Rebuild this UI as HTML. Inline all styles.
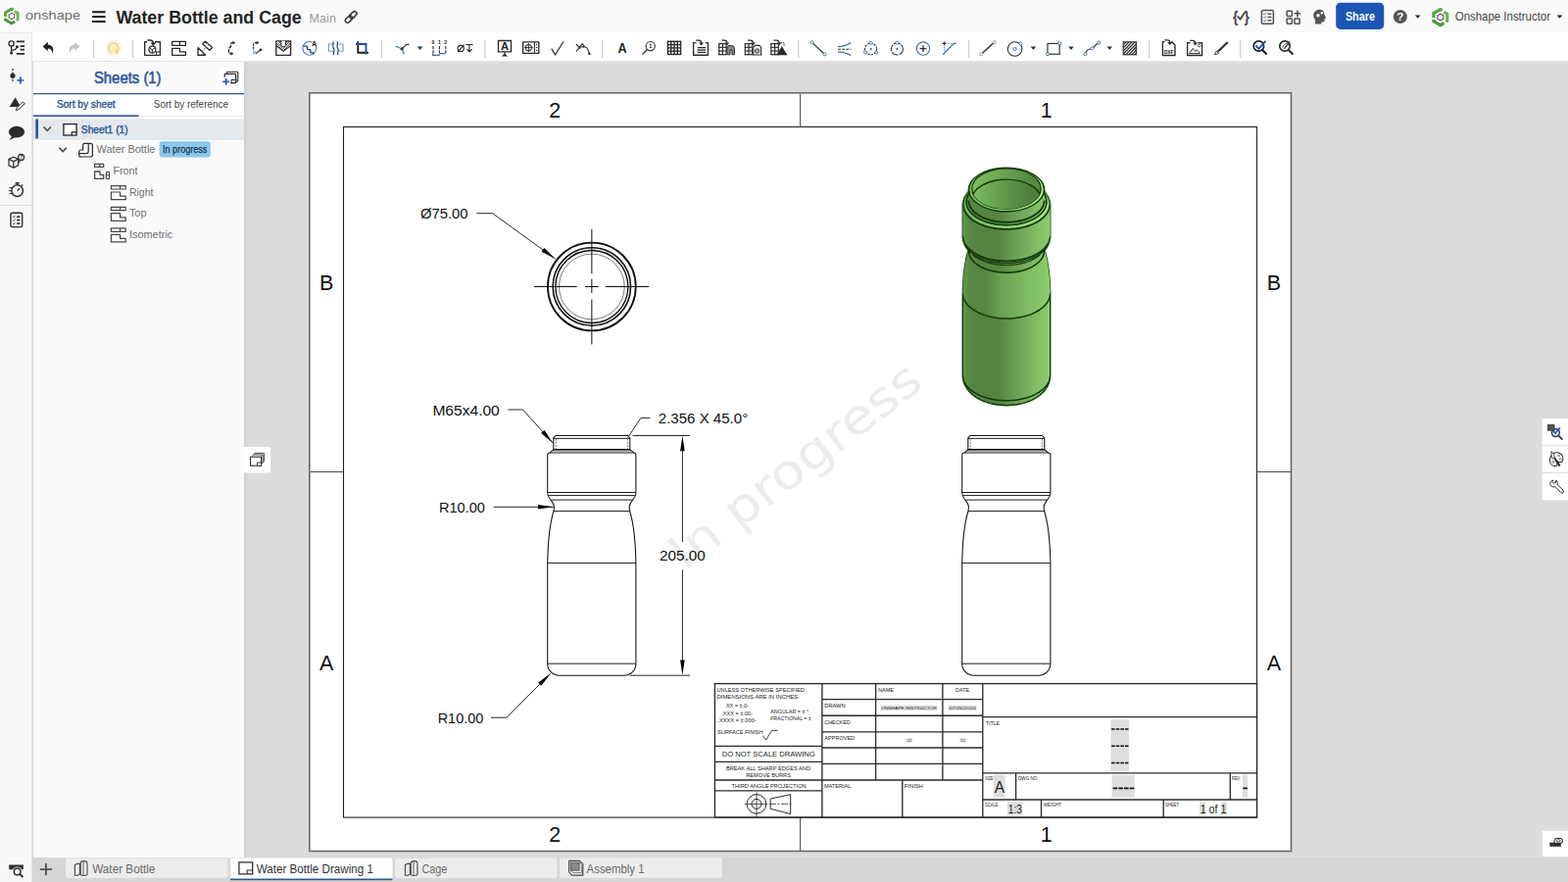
<!DOCTYPE html>
<html lang="en"><head><meta charset="utf-8"><title>Water Bottle and Cage | Onshape</title>
<style>
*{box-sizing:border-box;margin:0;padding:0}
html,body{width:1600px;height:900px;overflow:hidden;background:#dcdcdc;font-family:"Liberation Sans",sans-serif;}
#app{position:relative;width:1600px;height:900px;overflow:hidden}
.abs{position:absolute}
#header{position:absolute;left:0;top:0;width:1600px;height:33px;background:#fafafa}
#toolbar{position:absolute;left:33px;top:33px;width:1567px;height:30px;background:#fff;border-bottom:1px solid #e6e6e6}
#rail{position:absolute;left:0;top:33px;width:33px;height:867px;background:#f8f8f8;border-right:1px solid #e4e4e4;border-top:1px solid #ebebeb}
#panel{position:absolute;left:34px;top:63px;width:215px;height:812px;background:#fafafa}
#panelshadow{position:absolute;left:249px;top:63px;width:5px;height:812px;background:linear-gradient(90deg,#cfcfcf,#dcdcdc)}
#tabs{position:absolute;left:33px;top:875px;width:1567px;height:25px;background:#d6d6d6}
.t{position:absolute;white-space:nowrap;transform-origin:0 0;line-height:1}
svg{position:absolute;left:0;top:0;overflow:visible}
</style></head>
<body><div id="app">
<div id="header"></div>
<div id="toolbar"></div>
<div id="rail"></div>
<div id="panel"></div>
<div id="panelshadow"></div>
<div id="tabs"></div>
<svg id="sheet" width="1600" height="900" viewBox="0 0 1600 900" font-family='"Liberation Sans",sans-serif'>
<rect x="315.80" y="94.80" width="1001.70" height="773.70" fill="#fff" stroke="#686868" stroke-width="1.6"/>
<rect x="350.50" y="129.50" width="932.00" height="704.60" fill="none" stroke="#222" stroke-width="1.1"/>
<line x1="816.60" y1="96.00" x2="816.60" y2="129.50" stroke="#333" stroke-width="0.9"/>
<line x1="816.60" y1="834.00" x2="816.60" y2="868.00" stroke="#333" stroke-width="0.9"/>
<line x1="317.00" y1="481.50" x2="350.50" y2="481.50" stroke="#333" stroke-width="0.9"/>
<line x1="1282.50" y1="481.50" x2="1317.00" y2="481.50" stroke="#333" stroke-width="0.9"/>
<text transform="translate(821.5,488.5) rotate(-37.7)" x="0" y="0" text-anchor="middle" font-size="49" textLength="310" lengthAdjust="spacingAndGlyphs" fill="#ececec" font-family='"DejaVu Sans","Liberation Sans",sans-serif'>In progress</text>
<text x="566.30" y="120.30" font-size="21.5" fill="#111" text-anchor="middle">2</text>
<text x="566.30" y="858.80" font-size="21.5" fill="#111" text-anchor="middle">2</text>
<text x="1067.80" y="120.30" font-size="21.5" fill="#111" text-anchor="middle">1</text>
<text x="1067.80" y="858.80" font-size="21.5" fill="#111" text-anchor="middle">1</text>
<text x="333.20" y="296.10" font-size="21.5" fill="#111" text-anchor="middle">B</text>
<text x="333.20" y="683.70" font-size="21.5" fill="#111" text-anchor="middle">A</text>
<text x="1300.00" y="296.10" font-size="21.5" fill="#111" text-anchor="middle">B</text>
<text x="1300.00" y="683.70" font-size="21.5" fill="#111" text-anchor="middle">A</text>
<circle cx="603.85" cy="292.5" r="44.9" fill="none" stroke="#111" stroke-width="1.8"/>
<circle cx="603.85" cy="292.5" r="39.7" fill="none" stroke="#111" stroke-width="1.6"/>
<circle cx="603.85" cy="292.5" r="37" fill="none" stroke="#111" stroke-width="1.35"/>
<circle cx="603.85" cy="292.5" r="33.4" fill="none" stroke="#222" stroke-width="0.6"/>
<line x1="545.10" y1="292.50" x2="588.60" y2="292.50" stroke="#000" stroke-width="0.95"/>
<line x1="597.00" y1="292.50" x2="610.70" y2="292.50" stroke="#000" stroke-width="0.95"/>
<line x1="617.90" y1="292.50" x2="662.30" y2="292.50" stroke="#000" stroke-width="0.95"/>
<line x1="603.85" y1="233.70" x2="603.85" y2="279.10" stroke="#000" stroke-width="0.95"/>
<line x1="603.85" y1="284.80" x2="603.85" y2="298.90" stroke="#000" stroke-width="0.95"/>
<line x1="603.85" y1="305.50" x2="603.85" y2="351.50" stroke="#000" stroke-width="0.95"/>
<path d="M567.0999999999999,444.5 H640.5 L642.8,446.8 V458.6 L645.0999999999999,460.6 L646.5,462 Q648.9,462 648.9,464.5 V503 C648.9,509 642.4,511.5 642.1999999999999,517 C642.1999999999999,519 642.3,520 642.5999999999999,521.5 C645.3,530 648.4,548 648.9,575 V677 A12,12 0 0 1 636.9,689.2 H570.6999999999999 A12,12 0 0 1 558.6999999999999,677 V575 C559.1999999999999,548 562.3,530 565.0,521.5 C565.3,520 565.4,519 565.4,517 C565.1999999999999,511.5 558.6999999999999,509 558.6999999999999,503 V464.5 Q558.6999999999999,462 561.0999999999999,462 L562.5,460.6 L564.8,458.6 V446.8 Z" fill="none" stroke="#111" stroke-width="1.05" stroke-linejoin="round"/>
<line x1="564.80" y1="447.40" x2="642.80" y2="447.40" stroke="#111" stroke-width="0.95"/>
<line x1="567.20" y1="447.60" x2="567.20" y2="458.30" stroke="#333" stroke-width="0.6" stroke-dasharray="2.2 0.9"/>
<line x1="640.40" y1="447.60" x2="640.40" y2="458.30" stroke="#333" stroke-width="0.6" stroke-dasharray="2.2 0.9"/>
<line x1="564.80" y1="458.70" x2="642.80" y2="458.70" stroke="#111" stroke-width="1.2"/>
<line x1="563.80" y1="459.90" x2="643.80" y2="459.90" stroke="#222" stroke-width="0.9"/>
<line x1="561.10" y1="462.00" x2="646.50" y2="462.00" stroke="#111" stroke-width="0.95"/>
<line x1="558.70" y1="502.50" x2="648.90" y2="502.50" stroke="#111" stroke-width="0.95"/>
<line x1="559.40" y1="505.60" x2="648.20" y2="505.60" stroke="#111" stroke-width="0.95"/>
<line x1="562.80" y1="510.10" x2="644.80" y2="510.10" stroke="#111" stroke-width="0.95"/>
<line x1="565.00" y1="521.60" x2="642.60" y2="521.60" stroke="#111" stroke-width="0.95"/>
<line x1="558.70" y1="574.60" x2="648.90" y2="574.60" stroke="#111" stroke-width="0.95"/>
<line x1="558.70" y1="677.20" x2="648.90" y2="677.20" stroke="#111" stroke-width="0.95"/>
<path d="M990.0999999999999,444.5 H1063.5 L1065.8,446.8 V458.6 L1068.1,460.6 L1069.5,462 Q1071.8999999999999,462 1071.8999999999999,464.5 V503 C1071.8999999999999,509 1065.3999999999999,511.5 1065.2,517 C1065.2,519 1065.3,520 1065.6,521.5 C1068.3,530 1071.3999999999999,548 1071.8999999999999,575 V677 A12,12 0 0 1 1059.8999999999999,689.2 H993.6999999999999 A12,12 0 0 1 981.6999999999999,677 V575 C982.1999999999999,548 985.3,530 988.0,521.5 C988.3,520 988.4,519 988.4,517 C988.1999999999999,511.5 981.6999999999999,509 981.6999999999999,503 V464.5 Q981.6999999999999,462 984.0999999999999,462 L985.5,460.6 L987.8,458.6 V446.8 Z" fill="none" stroke="#111" stroke-width="1.05" stroke-linejoin="round"/>
<line x1="987.80" y1="447.40" x2="1065.80" y2="447.40" stroke="#111" stroke-width="0.95"/>
<line x1="990.20" y1="447.60" x2="990.20" y2="458.30" stroke="#333" stroke-width="0.6" stroke-dasharray="2.2 0.9"/>
<line x1="1063.40" y1="447.60" x2="1063.40" y2="458.30" stroke="#333" stroke-width="0.6" stroke-dasharray="2.2 0.9"/>
<line x1="987.80" y1="458.70" x2="1065.80" y2="458.70" stroke="#111" stroke-width="1.2"/>
<line x1="986.80" y1="459.90" x2="1066.80" y2="459.90" stroke="#222" stroke-width="0.9"/>
<line x1="984.10" y1="462.00" x2="1069.50" y2="462.00" stroke="#111" stroke-width="0.95"/>
<line x1="981.70" y1="502.50" x2="1071.90" y2="502.50" stroke="#111" stroke-width="0.95"/>
<line x1="982.40" y1="505.60" x2="1071.20" y2="505.60" stroke="#111" stroke-width="0.95"/>
<line x1="985.80" y1="510.10" x2="1067.80" y2="510.10" stroke="#111" stroke-width="0.95"/>
<line x1="988.00" y1="521.60" x2="1065.60" y2="521.60" stroke="#111" stroke-width="0.95"/>
<line x1="981.70" y1="574.60" x2="1071.90" y2="574.60" stroke="#111" stroke-width="0.95"/>
<line x1="981.70" y1="677.20" x2="1071.90" y2="677.20" stroke="#111" stroke-width="0.95"/>
<defs><linearGradient id="gbody" gradientUnits="userSpaceOnUse" x1="981.9" x2="1072.1" y1="0" y2="0"><stop offset="0" stop-color="#5f9c49"/><stop offset="0.09" stop-color="#578543"/><stop offset="0.4" stop-color="#568340"/><stop offset="0.56" stop-color="#679a50"/><stop offset="0.72" stop-color="#77ad5d"/><stop offset="0.87" stop-color="#82c066"/><stop offset="1" stop-color="#8dcd6f"/></linearGradient><linearGradient id="gsh" gradientUnits="userSpaceOnUse" x1="981.9" x2="1072.1" y1="0" y2="0"><stop offset="0" stop-color="#5f9c49"/><stop offset="0.09" stop-color="#578543"/><stop offset="0.27" stop-color="#588642"/><stop offset="0.44" stop-color="#6aa151"/><stop offset="0.62" stop-color="#78b05e"/><stop offset="0.85" stop-color="#84c468"/><stop offset="1" stop-color="#8dcd6f"/></linearGradient><linearGradient id="gface" gradientUnits="userSpaceOnUse" x1="981.9" x2="1072.1" y1="0" y2="0"><stop offset="0" stop-color="#6fb056"/><stop offset="0.35" stop-color="#86c96a"/><stop offset="1" stop-color="#a9ea8a"/></linearGradient><linearGradient id="gwall" gradientUnits="userSpaceOnUse" x1="981.9" x2="1072.1" y1="0" y2="0"><stop offset="0.1" stop-color="#7dc161"/><stop offset="0.45" stop-color="#6aa552"/><stop offset="0.8" stop-color="#568742"/><stop offset="1" stop-color="#4f7d3c"/></linearGradient><linearGradient id="gin" gradientUnits="userSpaceOnUse" x1="981.9" x2="1072.1" y1="0" y2="0"><stop offset="0.1" stop-color="#7cc05f"/><stop offset="0.4" stop-color="#65a04e"/><stop offset="0.75" stop-color="#527f3e"/><stop offset="1" stop-color="#4d7a3a"/></linearGradient><clipPath id="rimclip"><ellipse cx="1027.0" cy="192.6" rx="35.2" ry="20.6"/></clipPath></defs>
<path d="M1027.0,172.0 L1036.3,172.7 L1040.1,173.4 L1042.9,174.1 L1045.2,174.8 L1047.1,175.5 L1048.8,176.2 L1050.4,176.9 L1051.7,177.6 L1053.0,178.3 L1054.2,179.0 L1055.4,179.7 L1056.4,180.4 L1057.4,181.1 L1058.3,181.8 L1059.2,182.5 L1060.0,183.2 L1060.7,183.9 L1061.3,184.6 L1061.9,185.3 L1062.5,186.0 L1063.0,186.7 L1063.4,187.4 L1063.8,188.1 L1064.2,188.8 L1064.5,189.5 L1064.8,190.2 L1065.0,190.9 L1065.2,191.6 L1065.4,192.3 L1065.5,193.0 L1065.6,193.7 L1065.6,194.4 L1065.6,195.1 L1065.9,195.8 L1066.5,196.5 L1067.1,197.2 L1067.6,197.9 L1068.1,198.6 L1068.6,199.3 L1069.0,200.0 L1069.4,200.7 L1069.8,201.4 L1070.1,202.1 L1070.3,202.8 L1070.6,203.5 L1070.8,204.2 L1071.0,204.9 L1071.2,205.6 L1071.4,206.3 L1071.5,207.0 L1071.6,207.7 L1071.7,208.4 L1071.7,209.1 L1071.7,209.8 L1071.7,210.5 L1071.7,211.2 L1071.7,211.9 L1071.7,212.6 L1071.7,213.4 L1071.7,214.1 L1071.7,214.8 L1071.7,215.5 L1071.7,216.2 L1071.7,216.9 L1071.7,217.6 L1071.7,218.3 L1071.7,219.0 L1071.7,219.7 L1071.7,220.4 L1071.7,221.1 L1071.7,221.8 L1071.7,222.5 L1071.7,223.2 L1071.7,223.9 L1071.7,224.6 L1071.7,225.3 L1071.7,226.0 L1071.7,226.7 L1071.7,227.4 L1071.7,228.1 L1071.7,228.8 L1071.7,229.5 L1071.7,230.2 L1071.7,230.9 L1071.7,231.6 L1071.7,232.3 L1071.7,233.0 L1071.7,233.7 L1071.7,234.4 L1071.7,235.1 L1071.7,235.8 L1071.7,236.5 L1071.7,237.2 L1071.7,237.9 L1071.7,238.6 L1071.7,239.3 L1071.7,240.0 L1071.7,240.7 L1071.7,241.4 L1071.7,242.1 L1071.6,242.8 L1071.5,243.5 L1071.4,244.2 L1071.3,244.9 L1071.1,245.6 L1070.9,246.3 L1070.7,247.0 L1070.5,247.7 L1070.2,248.4 L1069.9,249.1 L1069.6,249.8 L1069.3,250.5 L1068.9,251.2 L1068.5,251.9 L1068.1,252.6 L1067.6,253.3 L1067.1,254.0 L1066.6,254.7 L1066.0,255.4 L1066.2,256.1 L1066.4,256.8 L1066.6,257.5 L1066.8,258.2 L1067.0,258.9 L1067.2,259.6 L1067.3,260.3 L1067.5,261.0 L1067.7,261.7 L1067.8,262.4 L1068.0,263.1 L1068.1,263.8 L1068.3,264.5 L1068.4,265.2 L1068.5,265.9 L1068.7,266.6 L1068.8,267.3 L1068.9,268.0 L1069.0,268.7 L1069.1,269.4 L1069.3,270.1 L1069.4,270.8 L1069.5,271.5 L1069.6,272.2 L1069.7,272.9 L1069.8,273.6 L1069.9,274.3 L1070.0,275.0 L1070.0,275.7 L1070.1,276.4 L1070.2,277.1 L1070.3,277.8 L1070.4,278.5 L1070.5,279.2 L1070.5,279.9 L1070.6,280.6 L1070.7,281.3 L1070.7,282.0 L1070.8,282.7 L1070.9,283.4 L1070.9,284.1 L1071.0,284.8 L1071.0,285.5 L1071.1,286.2 L1071.1,286.9 L1071.2,287.6 L1071.2,288.3 L1071.3,289.0 L1071.3,289.7 L1071.3,290.4 L1071.4,291.1 L1071.4,291.8 L1071.5,292.5 L1071.5,293.2 L1071.5,293.9 L1071.5,294.6 L1071.6,295.3 L1071.6,296.0 L1071.6,296.7 L1071.6,297.4 L1071.7,298.1 L1071.7,298.8 L1071.7,299.5 L1071.7,300.2 L1071.7,300.9 L1071.7,301.6 L1071.7,302.3 L1071.7,303.0 L1071.7,303.7 L1071.7,304.4 L1071.7,305.1 L1071.7,305.8 L1071.7,306.5 L1071.7,307.2 L1071.7,307.9 L1071.7,308.6 L1071.7,309.3 L1071.7,310.0 L1071.7,310.7 L1071.7,311.4 L1071.7,312.1 L1071.7,312.8 L1071.7,313.5 L1071.7,314.2 L1071.7,314.9 L1071.7,315.6 L1071.7,316.3 L1071.7,317.0 L1071.7,317.7 L1071.7,318.4 L1071.7,319.1 L1071.7,319.8 L1071.7,320.5 L1071.7,321.2 L1071.7,321.9 L1071.7,322.6 L1071.7,323.3 L1071.7,324.0 L1071.7,324.7 L1071.7,325.4 L1071.7,326.1 L1071.7,326.8 L1071.7,327.5 L1071.7,328.2 L1071.7,328.9 L1071.7,329.7 L1071.7,330.4 L1071.7,331.1 L1071.7,331.8 L1071.7,332.5 L1071.7,333.2 L1071.7,333.9 L1071.7,334.6 L1071.7,335.3 L1071.7,336.0 L1071.7,336.7 L1071.7,337.4 L1071.7,338.1 L1071.7,338.8 L1071.7,339.5 L1071.7,340.2 L1071.7,340.9 L1071.7,341.6 L1071.7,342.3 L1071.7,343.0 L1071.7,343.7 L1071.7,344.4 L1071.7,345.1 L1071.7,345.8 L1071.7,346.5 L1071.7,347.2 L1071.7,347.9 L1071.7,348.6 L1071.7,349.3 L1071.7,350.0 L1071.7,350.7 L1071.7,351.4 L1071.7,352.1 L1071.7,352.8 L1071.7,353.5 L1071.7,354.2 L1071.7,354.9 L1071.7,355.6 L1071.7,356.3 L1071.7,357.0 L1071.7,357.7 L1071.7,358.4 L1071.7,359.1 L1071.7,359.8 L1071.7,360.5 L1071.7,361.2 L1071.7,361.9 L1071.7,362.6 L1071.7,363.3 L1071.7,364.0 L1071.7,364.7 L1071.7,365.4 L1071.7,366.1 L1071.7,366.8 L1071.7,367.5 L1071.7,368.2 L1071.7,368.9 L1071.7,369.6 L1071.7,370.3 L1071.7,371.0 L1071.7,371.7 L1071.7,372.4 L1071.7,373.1 L1071.7,373.8 L1071.7,374.5 L1071.7,375.2 L1071.7,375.9 L1071.7,376.6 L1071.7,377.3 L1071.7,378.0 L1071.7,378.7 L1071.7,379.4 L1071.7,380.1 L1071.7,380.8 L1071.7,381.5 L1071.7,382.2 L1071.7,382.9 L1071.7,383.6 L1071.6,384.3 L1071.6,385.0 L1071.5,385.7 L1071.4,386.4 L1071.3,387.1 L1071.1,387.8 L1071.0,388.5 L1070.8,389.2 L1070.6,389.9 L1070.4,390.6 L1070.1,391.3 L1069.8,392.0 L1069.5,392.7 L1069.2,393.4 L1068.8,394.1 L1068.4,394.8 L1068.0,395.5 L1067.5,396.2 L1067.1,396.9 L1066.6,397.6 L1066.0,398.3 L1065.4,399.0 L1064.8,399.7 L1064.2,400.4 L1063.5,401.1 L1062.7,401.8 L1061.9,402.5 L1061.1,403.2 L1060.2,403.9 L1059.2,404.6 L1058.2,405.3 L1057.1,406.0 L1055.9,406.7 L1054.6,407.4 L1053.2,408.1 L1051.7,408.8 L1050.0,409.5 L1048.2,410.2 L1046.1,410.9 L1043.6,411.6 L1040.7,412.3 L1036.8,413.0 L1027.0,413.7 L1027.0,413.7 L1017.2,413.0 L1013.3,412.3 L1010.4,411.6 L1007.9,410.9 L1005.8,410.2 L1004.0,409.5 L1002.3,408.8 L1000.8,408.1 L999.4,407.4 L998.1,406.7 L996.9,406.0 L995.8,405.3 L994.8,404.6 L993.8,403.9 L992.9,403.2 L992.1,402.5 L991.3,401.8 L990.5,401.1 L989.8,400.4 L989.2,399.7 L988.6,399.0 L988.0,398.3 L987.4,397.6 L986.9,396.9 L986.5,396.2 L986.0,395.5 L985.6,394.8 L985.2,394.1 L984.8,393.4 L984.5,392.7 L984.2,392.0 L983.9,391.3 L983.6,390.6 L983.4,389.9 L983.2,389.2 L983.0,388.5 L982.9,387.8 L982.7,387.1 L982.6,386.4 L982.5,385.7 L982.4,385.0 L982.4,384.3 L982.3,383.6 L982.3,382.9 L982.3,382.2 L982.3,381.5 L982.3,380.8 L982.3,380.1 L982.3,379.4 L982.3,378.7 L982.3,378.0 L982.3,377.3 L982.3,376.6 L982.3,375.9 L982.3,375.2 L982.3,374.5 L982.3,373.8 L982.3,373.1 L982.3,372.4 L982.3,371.7 L982.3,371.0 L982.3,370.3 L982.3,369.6 L982.3,368.9 L982.3,368.2 L982.3,367.5 L982.3,366.8 L982.3,366.1 L982.3,365.4 L982.3,364.7 L982.3,364.0 L982.3,363.3 L982.3,362.6 L982.3,361.9 L982.3,361.2 L982.3,360.5 L982.3,359.8 L982.3,359.1 L982.3,358.4 L982.3,357.7 L982.3,357.0 L982.3,356.3 L982.3,355.6 L982.3,354.9 L982.3,354.2 L982.3,353.5 L982.3,352.8 L982.3,352.1 L982.3,351.4 L982.3,350.7 L982.3,350.0 L982.3,349.3 L982.3,348.6 L982.3,347.9 L982.3,347.2 L982.3,346.5 L982.3,345.8 L982.3,345.1 L982.3,344.4 L982.3,343.7 L982.3,343.0 L982.3,342.3 L982.3,341.6 L982.3,340.9 L982.3,340.2 L982.3,339.5 L982.3,338.8 L982.3,338.1 L982.3,337.4 L982.3,336.7 L982.3,336.0 L982.3,335.3 L982.3,334.6 L982.3,333.9 L982.3,333.2 L982.3,332.5 L982.3,331.8 L982.3,331.1 L982.3,330.4 L982.3,329.7 L982.3,328.9 L982.3,328.2 L982.3,327.5 L982.3,326.8 L982.3,326.1 L982.3,325.4 L982.3,324.7 L982.3,324.0 L982.3,323.3 L982.3,322.6 L982.3,321.9 L982.3,321.2 L982.3,320.5 L982.3,319.8 L982.3,319.1 L982.3,318.4 L982.3,317.7 L982.3,317.0 L982.3,316.3 L982.3,315.6 L982.3,314.9 L982.3,314.2 L982.3,313.5 L982.3,312.8 L982.3,312.1 L982.3,311.4 L982.3,310.7 L982.3,310.0 L982.3,309.3 L982.3,308.6 L982.3,307.9 L982.3,307.2 L982.3,306.5 L982.3,305.8 L982.3,305.1 L982.3,304.4 L982.3,303.7 L982.3,303.0 L982.3,302.3 L982.3,301.6 L982.3,300.9 L982.3,300.2 L982.3,299.5 L982.3,298.8 L982.3,298.1 L982.4,297.4 L982.4,296.7 L982.4,296.0 L982.4,295.3 L982.5,294.6 L982.5,293.9 L982.5,293.2 L982.5,292.5 L982.6,291.8 L982.6,291.1 L982.7,290.4 L982.7,289.7 L982.7,289.0 L982.8,288.3 L982.8,287.6 L982.9,286.9 L982.9,286.2 L983.0,285.5 L983.0,284.8 L983.1,284.1 L983.1,283.4 L983.2,282.7 L983.3,282.0 L983.3,281.3 L983.4,280.6 L983.5,279.9 L983.5,279.2 L983.6,278.5 L983.7,277.8 L983.8,277.1 L983.9,276.4 L984.0,275.7 L984.0,275.0 L984.1,274.3 L984.2,273.6 L984.3,272.9 L984.4,272.2 L984.5,271.5 L984.6,270.8 L984.7,270.1 L984.9,269.4 L985.0,268.7 L985.1,268.0 L985.2,267.3 L985.3,266.6 L985.5,265.9 L985.6,265.2 L985.7,264.5 L985.9,263.8 L986.0,263.1 L986.2,262.4 L986.3,261.7 L986.5,261.0 L986.7,260.3 L986.8,259.6 L987.0,258.9 L987.2,258.2 L987.4,257.5 L987.6,256.8 L987.8,256.1 L988.0,255.4 L987.4,254.7 L986.9,254.0 L986.4,253.3 L985.9,252.6 L985.5,251.9 L985.1,251.2 L984.7,250.5 L984.4,249.8 L984.1,249.1 L983.8,248.4 L983.5,247.7 L983.3,247.0 L983.1,246.3 L982.9,245.6 L982.7,244.9 L982.6,244.2 L982.5,243.5 L982.4,242.8 L982.3,242.1 L982.3,241.4 L982.3,240.7 L982.3,240.0 L982.3,239.3 L982.3,238.6 L982.3,237.9 L982.3,237.2 L982.3,236.5 L982.3,235.8 L982.3,235.1 L982.3,234.4 L982.3,233.7 L982.3,233.0 L982.3,232.3 L982.3,231.6 L982.3,230.9 L982.3,230.2 L982.3,229.5 L982.3,228.8 L982.3,228.1 L982.3,227.4 L982.3,226.7 L982.3,226.0 L982.3,225.3 L982.3,224.6 L982.3,223.9 L982.3,223.2 L982.3,222.5 L982.3,221.8 L982.3,221.1 L982.3,220.4 L982.3,219.7 L982.3,219.0 L982.3,218.3 L982.3,217.6 L982.3,216.9 L982.3,216.2 L982.3,215.5 L982.3,214.8 L982.3,214.1 L982.3,213.4 L982.3,212.6 L982.3,211.9 L982.3,211.2 L982.3,210.5 L982.3,209.8 L982.3,209.1 L982.3,208.4 L982.4,207.7 L982.5,207.0 L982.6,206.3 L982.8,205.6 L983.0,204.9 L983.2,204.2 L983.4,203.5 L983.7,202.8 L983.9,202.1 L984.2,201.4 L984.6,200.7 L985.0,200.0 L985.4,199.3 L985.9,198.6 L986.4,197.9 L986.9,197.2 L987.5,196.5 L988.1,195.8 L988.4,195.1 L988.4,194.4 L988.4,193.7 L988.5,193.0 L988.6,192.3 L988.8,191.6 L989.0,190.9 L989.2,190.2 L989.5,189.5 L989.8,188.8 L990.2,188.1 L990.6,187.4 L991.0,186.7 L991.5,186.0 L992.1,185.3 L992.7,184.6 L993.3,183.9 L994.0,183.2 L994.8,182.5 L995.7,181.8 L996.6,181.1 L997.6,180.4 L998.6,179.7 L999.8,179.0 L1001.0,178.3 L1002.3,177.6 L1003.6,176.9 L1005.2,176.2 L1006.9,175.5 L1008.8,174.8 L1011.1,174.1 L1013.9,173.4 L1017.7,172.7 L1027.0,172.0Z" fill="url(#gbody)" stroke="#12380a" stroke-width="1.4" stroke-linejoin="round"/>
<path d="M1027.0,233.9 L1038.5,234.9 L1043.1,235.9 L1046.4,236.9 L1049.2,237.9 L1051.5,238.9 L1053.4,240.0 L1055.2,241.0 L1056.7,242.0 L1058.1,243.0 L1059.3,244.0 L1060.4,245.0 L1061.3,246.0 L1062.2,247.0 L1062.9,248.0 L1063.5,249.0 L1064.1,250.1 L1064.5,251.1 L1064.9,252.1 L1065.3,253.1 L1065.6,254.1 L1065.9,255.1 L1066.2,256.1 L1066.5,257.1 L1066.8,258.1 L1067.1,259.1 L1067.3,260.2 L1067.5,261.2 L1067.8,262.2 L1068.0,263.2 L1068.2,264.2 L1068.4,265.2 L1068.6,266.2 L1068.8,267.2 L1068.9,268.2 L1069.1,269.2 L1069.3,270.3 L1069.4,271.3 L1069.6,272.3 L1069.7,273.3 L1069.9,274.3 L1070.0,275.3 L1070.1,276.3 L1070.2,277.3 L1070.4,278.3 L1070.5,279.3 L1070.6,280.4 L1070.7,281.4 L1070.8,282.4 L1070.9,283.4 L1070.9,284.4 L1071.0,285.4 L1071.1,286.4 L1071.2,287.4 L1071.2,288.4 L1071.3,289.4 L1071.3,290.4 L1071.4,291.5 L1071.5,292.5 L1071.5,293.5 L1071.5,294.5 L1071.6,295.5 L1071.6,296.5 L1071.6,297.5 L1071.7,298.5 L1071.7,299.5 L1071.6,300.5 L1071.5,301.6 L1071.3,302.6 L1071.0,303.6 L1070.6,304.6 L1070.2,305.6 L1069.7,306.6 L1069.1,307.6 L1068.5,308.6 L1067.7,309.6 L1066.9,310.6 L1065.9,311.7 L1064.9,312.7 L1063.7,313.7 L1062.5,314.7 L1061.1,315.7 L1059.5,316.7 L1057.7,317.7 L1055.8,318.7 L1053.6,319.7 L1051.0,320.7 L1048.0,321.8 L1044.3,322.8 L1039.4,323.8 L1027.0,324.8 L1027.0,324.8 L1014.6,323.8 L1009.7,322.8 L1006.0,321.8 L1003.0,320.7 L1000.4,319.7 L998.2,318.7 L996.3,317.7 L994.5,316.7 L992.9,315.7 L991.5,314.7 L990.3,313.7 L989.1,312.7 L988.1,311.7 L987.1,310.6 L986.3,309.6 L985.5,308.6 L984.9,307.6 L984.3,306.6 L983.8,305.6 L983.4,304.6 L983.0,303.6 L982.7,302.6 L982.5,301.6 L982.4,300.5 L982.3,299.5 L982.3,298.5 L982.4,297.5 L982.4,296.5 L982.4,295.5 L982.5,294.5 L982.5,293.5 L982.5,292.5 L982.6,291.5 L982.7,290.4 L982.7,289.4 L982.8,288.4 L982.8,287.4 L982.9,286.4 L983.0,285.4 L983.1,284.4 L983.1,283.4 L983.2,282.4 L983.3,281.4 L983.4,280.4 L983.5,279.3 L983.6,278.3 L983.8,277.3 L983.9,276.3 L984.0,275.3 L984.1,274.3 L984.3,273.3 L984.4,272.3 L984.6,271.3 L984.7,270.3 L984.9,269.2 L985.1,268.2 L985.2,267.2 L985.4,266.2 L985.6,265.2 L985.8,264.2 L986.0,263.2 L986.2,262.2 L986.5,261.2 L986.7,260.2 L986.9,259.1 L987.2,258.1 L987.5,257.1 L987.8,256.1 L988.1,255.1 L988.4,254.1 L988.7,253.1 L989.1,252.1 L989.5,251.1 L989.9,250.1 L990.5,249.0 L991.1,248.0 L991.8,247.0 L992.7,246.0 L993.6,245.0 L994.7,244.0 L995.9,243.0 L997.3,242.0 L998.8,241.0 L1000.6,240.0 L1002.5,238.9 L1004.8,237.9 L1007.6,236.9 L1010.9,235.9 L1015.5,234.9 L1027.0,233.9Z" fill="url(#gsh)"/>
<path d="M1027.0,172.0 L1038.1,173.0 L1042.5,174.0 L1045.7,175.0 L1048.4,176.0 L1050.6,177.0 L1052.5,178.0 L1054.2,179.0 L1055.8,180.0 L1057.3,181.0 L1058.6,182.0 L1059.7,183.0 L1060.8,184.0 L1061.7,185.0 L1062.5,186.0 L1063.2,187.0 L1063.8,188.0 L1064.3,189.0 L1064.7,190.0 L1065.1,191.0 L1065.3,192.0 L1065.5,193.0 L1065.6,194.0 L1065.6,195.0 L1066.0,196.0 L1066.9,197.0 L1067.7,198.0 L1068.4,199.0 L1069.0,200.0 L1069.6,201.0 L1070.0,202.0 L1070.4,203.0 L1070.7,204.0 L1071.1,205.0 L1071.3,206.0 L1071.5,207.0 L1071.6,208.0 L1071.7,209.0 L1071.7,210.0 L1071.7,211.0 L1071.7,212.0 L1071.7,213.0 L1071.7,214.0 L1071.7,215.0 L1071.7,216.0 L1071.7,217.0 L1071.7,218.0 L1071.7,219.0 L1071.7,220.0 L1071.7,221.0 L1071.7,222.0 L1071.7,223.0 L1071.7,224.0 L1071.7,225.0 L1071.7,226.0 L1071.7,227.0 L1071.7,228.0 L1071.7,229.0 L1071.7,230.0 L1071.7,231.0 L1071.7,232.0 L1071.7,233.0 L1071.7,234.0 L1071.7,235.0 L1071.7,236.0 L1071.7,237.0 L1071.7,238.0 L1071.7,239.0 L1071.7,240.0 L1071.7,241.0 L1071.7,242.0 L1071.6,243.0 L1071.4,244.0 L1071.2,245.0 L1071.0,246.0 L1070.7,247.0 L1070.4,248.0 L1070.0,249.0 L1069.5,250.0 L1069.0,251.0 L1068.4,252.0 L1067.8,253.0 L1067.1,254.0 L1066.3,255.0 L1065.4,256.0 L1065.4,257.0 L1065.3,258.0 L1065.1,259.0 L1064.8,260.0 L1064.4,261.0 L1063.9,262.1 L1063.4,263.1 L1062.7,264.1 L1062.0,265.1 L1061.2,266.1 L1060.2,267.1 L1059.1,268.1 L1057.9,269.1 L1056.6,270.1 L1055.0,271.1 L1053.3,272.1 L1051.3,273.1 L1049.0,274.1 L1046.3,275.1 L1043.0,276.1 L1038.4,277.1 L1027.0,278.1 L1027.0,278.1 L1015.6,277.1 L1011.0,276.1 L1007.7,275.1 L1005.0,274.1 L1002.7,273.1 L1000.7,272.1 L999.0,271.1 L997.4,270.1 L996.1,269.1 L994.9,268.1 L993.8,267.1 L992.8,266.1 L992.0,265.1 L991.3,264.1 L990.6,263.1 L990.1,262.1 L989.6,261.0 L989.2,260.0 L988.9,259.0 L988.7,258.0 L988.6,257.0 L988.6,256.0 L987.7,255.0 L986.9,254.0 L986.2,253.0 L985.6,252.0 L985.0,251.0 L984.5,250.0 L984.0,249.0 L983.6,248.0 L983.3,247.0 L983.0,246.0 L982.8,245.0 L982.6,244.0 L982.4,243.0 L982.3,242.0 L982.3,241.0 L982.3,240.0 L982.3,239.0 L982.3,238.0 L982.3,237.0 L982.3,236.0 L982.3,235.0 L982.3,234.0 L982.3,233.0 L982.3,232.0 L982.3,231.0 L982.3,230.0 L982.3,229.0 L982.3,228.0 L982.3,227.0 L982.3,226.0 L982.3,225.0 L982.3,224.0 L982.3,223.0 L982.3,222.0 L982.3,221.0 L982.3,220.0 L982.3,219.0 L982.3,218.0 L982.3,217.0 L982.3,216.0 L982.3,215.0 L982.3,214.0 L982.3,213.0 L982.3,212.0 L982.3,211.0 L982.3,210.0 L982.3,209.0 L982.4,208.0 L982.5,207.0 L982.7,206.0 L982.9,205.0 L983.3,204.0 L983.6,203.0 L984.0,202.0 L984.4,201.0 L985.0,200.0 L985.6,199.0 L986.3,198.0 L987.1,197.0 L988.0,196.0 L988.4,195.0 L988.4,194.0 L988.5,193.0 L988.7,192.0 L988.9,191.0 L989.3,190.0 L989.7,189.0 L990.2,188.0 L990.8,187.0 L991.5,186.0 L992.3,185.0 L993.2,184.0 L994.3,183.0 L995.4,182.0 L996.7,181.0 L998.2,180.0 L999.8,179.0 L1001.5,178.0 L1003.4,177.0 L1005.6,176.0 L1008.3,175.0 L1011.5,174.0 L1015.9,173.0 L1027.0,172.0Z" fill="url(#gbody)"/>
<ellipse cx="1027.0" cy="208.11" rx="44.6" ry="26.23" fill="url(#gface)"/>
<path d="M1027.0,172.0 L1036.3,172.7 L1040.1,173.4 L1042.9,174.1 L1045.2,174.8 L1047.2,175.5 L1048.9,176.2 L1050.4,176.9 L1051.8,177.6 L1053.0,178.4 L1054.2,179.1 L1055.4,179.8 L1056.5,180.5 L1057.5,181.2 L1058.4,181.9 L1059.2,182.6 L1060.0,183.3 L1060.7,184.0 L1061.4,184.7 L1062.0,185.4 L1062.5,186.1 L1063.0,186.8 L1063.5,187.5 L1063.9,188.2 L1064.2,188.9 L1064.6,189.6 L1064.8,190.3 L1065.1,191.0 L1065.3,191.7 L1065.4,192.4 L1065.5,193.1 L1065.6,193.8 L1065.6,194.5 L1065.6,195.3 L1065.6,196.0 L1065.6,196.7 L1065.6,197.4 L1065.6,198.1 L1065.9,198.8 L1066.3,199.5 L1066.6,200.2 L1066.9,200.9 L1067.2,201.6 L1067.4,202.3 L1067.6,203.0 L1067.7,203.7 L1067.8,204.4 L1067.9,205.1 L1067.9,205.8 L1067.9,206.5 L1067.9,207.2 L1067.8,207.9 L1067.7,208.6 L1067.6,209.3 L1067.4,210.0 L1067.1,210.7 L1066.9,211.5 L1066.6,212.2 L1066.2,212.9 L1065.9,213.6 L1065.4,214.3 L1065.0,215.0 L1064.4,215.7 L1063.9,216.4 L1063.3,217.1 L1062.6,217.8 L1061.9,218.5 L1061.1,219.2 L1060.3,219.9 L1059.4,220.6 L1058.4,221.3 L1057.3,222.0 L1056.2,222.7 L1054.9,223.4 L1053.5,224.1 L1052.0,224.8 L1050.4,225.5 L1048.5,226.2 L1046.4,226.9 L1043.9,227.6 L1040.9,228.4 L1036.9,229.1 L1027.0,229.8 L1027.0,229.8 L1017.1,229.1 L1013.1,228.4 L1010.1,227.6 L1007.6,226.9 L1005.5,226.2 L1003.6,225.5 L1002.0,224.8 L1000.5,224.1 L999.1,223.4 L997.8,222.7 L996.7,222.0 L995.6,221.3 L994.6,220.6 L993.7,219.9 L992.9,219.2 L992.1,218.5 L991.4,217.8 L990.7,217.1 L990.1,216.4 L989.6,215.7 L989.0,215.0 L988.6,214.3 L988.1,213.6 L987.8,212.9 L987.4,212.2 L987.1,211.5 L986.9,210.7 L986.6,210.0 L986.4,209.3 L986.3,208.6 L986.2,207.9 L986.1,207.2 L986.1,206.5 L986.1,205.8 L986.1,205.1 L986.2,204.4 L986.3,203.7 L986.4,203.0 L986.6,202.3 L986.8,201.6 L987.1,200.9 L987.4,200.2 L987.7,199.5 L988.1,198.8 L988.4,198.1 L988.4,197.4 L988.4,196.7 L988.4,196.0 L988.4,195.3 L988.4,194.5 L988.4,193.8 L988.5,193.1 L988.6,192.4 L988.7,191.7 L988.9,191.0 L989.2,190.3 L989.4,189.6 L989.8,188.9 L990.1,188.2 L990.5,187.5 L991.0,186.8 L991.5,186.1 L992.0,185.4 L992.6,184.7 L993.3,184.0 L994.0,183.3 L994.8,182.6 L995.6,181.9 L996.5,181.2 L997.5,180.5 L998.6,179.8 L999.8,179.1 L1001.0,178.4 L1002.2,177.6 L1003.6,176.9 L1005.1,176.2 L1006.8,175.5 L1008.8,174.8 L1011.1,174.1 L1013.9,173.4 L1017.7,172.7 L1027.0,172.0Z" fill="url(#gbody)"/>
<clipPath id="bodyclip"><path d="M1027.0,172.0 L1036.3,172.7 L1040.1,173.4 L1042.9,174.1 L1045.2,174.8 L1047.1,175.5 L1048.8,176.2 L1050.4,176.9 L1051.7,177.6 L1053.0,178.3 L1054.2,179.0 L1055.4,179.7 L1056.4,180.4 L1057.4,181.1 L1058.3,181.8 L1059.2,182.5 L1060.0,183.2 L1060.7,183.9 L1061.3,184.6 L1061.9,185.3 L1062.5,186.0 L1063.0,186.7 L1063.4,187.4 L1063.8,188.1 L1064.2,188.8 L1064.5,189.5 L1064.8,190.2 L1065.0,190.9 L1065.2,191.6 L1065.4,192.3 L1065.5,193.0 L1065.6,193.7 L1065.6,194.4 L1065.6,195.1 L1065.9,195.8 L1066.5,196.5 L1067.1,197.2 L1067.6,197.9 L1068.1,198.6 L1068.6,199.3 L1069.0,200.0 L1069.4,200.7 L1069.8,201.4 L1070.1,202.1 L1070.3,202.8 L1070.6,203.5 L1070.8,204.2 L1071.0,204.9 L1071.2,205.6 L1071.4,206.3 L1071.5,207.0 L1071.6,207.7 L1071.7,208.4 L1071.7,209.1 L1071.7,209.8 L1071.7,210.5 L1071.7,211.2 L1071.7,211.9 L1071.7,212.6 L1071.7,213.4 L1071.7,214.1 L1071.7,214.8 L1071.7,215.5 L1071.7,216.2 L1071.7,216.9 L1071.7,217.6 L1071.7,218.3 L1071.7,219.0 L1071.7,219.7 L1071.7,220.4 L1071.7,221.1 L1071.7,221.8 L1071.7,222.5 L1071.7,223.2 L1071.7,223.9 L1071.7,224.6 L1071.7,225.3 L1071.7,226.0 L1071.7,226.7 L1071.7,227.4 L1071.7,228.1 L1071.7,228.8 L1071.7,229.5 L1071.7,230.2 L1071.7,230.9 L1071.7,231.6 L1071.7,232.3 L1071.7,233.0 L1071.7,233.7 L1071.7,234.4 L1071.7,235.1 L1071.7,235.8 L1071.7,236.5 L1071.7,237.2 L1071.7,237.9 L1071.7,238.6 L1071.7,239.3 L1071.7,240.0 L1071.7,240.7 L1071.7,241.4 L1071.7,242.1 L1071.6,242.8 L1071.5,243.5 L1071.4,244.2 L1071.3,244.9 L1071.1,245.6 L1070.9,246.3 L1070.7,247.0 L1070.5,247.7 L1070.2,248.4 L1069.9,249.1 L1069.6,249.8 L1069.3,250.5 L1068.9,251.2 L1068.5,251.9 L1068.1,252.6 L1067.6,253.3 L1067.1,254.0 L1066.6,254.7 L1066.0,255.4 L1066.2,256.1 L1066.4,256.8 L1066.6,257.5 L1066.8,258.2 L1067.0,258.9 L1067.2,259.6 L1067.3,260.3 L1067.5,261.0 L1067.7,261.7 L1067.8,262.4 L1068.0,263.1 L1068.1,263.8 L1068.3,264.5 L1068.4,265.2 L1068.5,265.9 L1068.7,266.6 L1068.8,267.3 L1068.9,268.0 L1069.0,268.7 L1069.1,269.4 L1069.3,270.1 L1069.4,270.8 L1069.5,271.5 L1069.6,272.2 L1069.7,272.9 L1069.8,273.6 L1069.9,274.3 L1070.0,275.0 L1070.0,275.7 L1070.1,276.4 L1070.2,277.1 L1070.3,277.8 L1070.4,278.5 L1070.5,279.2 L1070.5,279.9 L1070.6,280.6 L1070.7,281.3 L1070.7,282.0 L1070.8,282.7 L1070.9,283.4 L1070.9,284.1 L1071.0,284.8 L1071.0,285.5 L1071.1,286.2 L1071.1,286.9 L1071.2,287.6 L1071.2,288.3 L1071.3,289.0 L1071.3,289.7 L1071.3,290.4 L1071.4,291.1 L1071.4,291.8 L1071.5,292.5 L1071.5,293.2 L1071.5,293.9 L1071.5,294.6 L1071.6,295.3 L1071.6,296.0 L1071.6,296.7 L1071.6,297.4 L1071.7,298.1 L1071.7,298.8 L1071.7,299.5 L1071.7,300.2 L1071.7,300.9 L1071.7,301.6 L1071.7,302.3 L1071.7,303.0 L1071.7,303.7 L1071.7,304.4 L1071.7,305.1 L1071.7,305.8 L1071.7,306.5 L1071.7,307.2 L1071.7,307.9 L1071.7,308.6 L1071.7,309.3 L1071.7,310.0 L1071.7,310.7 L1071.7,311.4 L1071.7,312.1 L1071.7,312.8 L1071.7,313.5 L1071.7,314.2 L1071.7,314.9 L1071.7,315.6 L1071.7,316.3 L1071.7,317.0 L1071.7,317.7 L1071.7,318.4 L1071.7,319.1 L1071.7,319.8 L1071.7,320.5 L1071.7,321.2 L1071.7,321.9 L1071.7,322.6 L1071.7,323.3 L1071.7,324.0 L1071.7,324.7 L1071.7,325.4 L1071.7,326.1 L1071.7,326.8 L1071.7,327.5 L1071.7,328.2 L1071.7,328.9 L1071.7,329.7 L1071.7,330.4 L1071.7,331.1 L1071.7,331.8 L1071.7,332.5 L1071.7,333.2 L1071.7,333.9 L1071.7,334.6 L1071.7,335.3 L1071.7,336.0 L1071.7,336.7 L1071.7,337.4 L1071.7,338.1 L1071.7,338.8 L1071.7,339.5 L1071.7,340.2 L1071.7,340.9 L1071.7,341.6 L1071.7,342.3 L1071.7,343.0 L1071.7,343.7 L1071.7,344.4 L1071.7,345.1 L1071.7,345.8 L1071.7,346.5 L1071.7,347.2 L1071.7,347.9 L1071.7,348.6 L1071.7,349.3 L1071.7,350.0 L1071.7,350.7 L1071.7,351.4 L1071.7,352.1 L1071.7,352.8 L1071.7,353.5 L1071.7,354.2 L1071.7,354.9 L1071.7,355.6 L1071.7,356.3 L1071.7,357.0 L1071.7,357.7 L1071.7,358.4 L1071.7,359.1 L1071.7,359.8 L1071.7,360.5 L1071.7,361.2 L1071.7,361.9 L1071.7,362.6 L1071.7,363.3 L1071.7,364.0 L1071.7,364.7 L1071.7,365.4 L1071.7,366.1 L1071.7,366.8 L1071.7,367.5 L1071.7,368.2 L1071.7,368.9 L1071.7,369.6 L1071.7,370.3 L1071.7,371.0 L1071.7,371.7 L1071.7,372.4 L1071.7,373.1 L1071.7,373.8 L1071.7,374.5 L1071.7,375.2 L1071.7,375.9 L1071.7,376.6 L1071.7,377.3 L1071.7,378.0 L1071.7,378.7 L1071.7,379.4 L1071.7,380.1 L1071.7,380.8 L1071.7,381.5 L1071.7,382.2 L1071.7,382.9 L1071.7,383.6 L1071.6,384.3 L1071.6,385.0 L1071.5,385.7 L1071.4,386.4 L1071.3,387.1 L1071.1,387.8 L1071.0,388.5 L1070.8,389.2 L1070.6,389.9 L1070.4,390.6 L1070.1,391.3 L1069.8,392.0 L1069.5,392.7 L1069.2,393.4 L1068.8,394.1 L1068.4,394.8 L1068.0,395.5 L1067.5,396.2 L1067.1,396.9 L1066.6,397.6 L1066.0,398.3 L1065.4,399.0 L1064.8,399.7 L1064.2,400.4 L1063.5,401.1 L1062.7,401.8 L1061.9,402.5 L1061.1,403.2 L1060.2,403.9 L1059.2,404.6 L1058.2,405.3 L1057.1,406.0 L1055.9,406.7 L1054.6,407.4 L1053.2,408.1 L1051.7,408.8 L1050.0,409.5 L1048.2,410.2 L1046.1,410.9 L1043.6,411.6 L1040.7,412.3 L1036.8,413.0 L1027.0,413.7 L1027.0,413.7 L1017.2,413.0 L1013.3,412.3 L1010.4,411.6 L1007.9,410.9 L1005.8,410.2 L1004.0,409.5 L1002.3,408.8 L1000.8,408.1 L999.4,407.4 L998.1,406.7 L996.9,406.0 L995.8,405.3 L994.8,404.6 L993.8,403.9 L992.9,403.2 L992.1,402.5 L991.3,401.8 L990.5,401.1 L989.8,400.4 L989.2,399.7 L988.6,399.0 L988.0,398.3 L987.4,397.6 L986.9,396.9 L986.5,396.2 L986.0,395.5 L985.6,394.8 L985.2,394.1 L984.8,393.4 L984.5,392.7 L984.2,392.0 L983.9,391.3 L983.6,390.6 L983.4,389.9 L983.2,389.2 L983.0,388.5 L982.9,387.8 L982.7,387.1 L982.6,386.4 L982.5,385.7 L982.4,385.0 L982.4,384.3 L982.3,383.6 L982.3,382.9 L982.3,382.2 L982.3,381.5 L982.3,380.8 L982.3,380.1 L982.3,379.4 L982.3,378.7 L982.3,378.0 L982.3,377.3 L982.3,376.6 L982.3,375.9 L982.3,375.2 L982.3,374.5 L982.3,373.8 L982.3,373.1 L982.3,372.4 L982.3,371.7 L982.3,371.0 L982.3,370.3 L982.3,369.6 L982.3,368.9 L982.3,368.2 L982.3,367.5 L982.3,366.8 L982.3,366.1 L982.3,365.4 L982.3,364.7 L982.3,364.0 L982.3,363.3 L982.3,362.6 L982.3,361.9 L982.3,361.2 L982.3,360.5 L982.3,359.8 L982.3,359.1 L982.3,358.4 L982.3,357.7 L982.3,357.0 L982.3,356.3 L982.3,355.6 L982.3,354.9 L982.3,354.2 L982.3,353.5 L982.3,352.8 L982.3,352.1 L982.3,351.4 L982.3,350.7 L982.3,350.0 L982.3,349.3 L982.3,348.6 L982.3,347.9 L982.3,347.2 L982.3,346.5 L982.3,345.8 L982.3,345.1 L982.3,344.4 L982.3,343.7 L982.3,343.0 L982.3,342.3 L982.3,341.6 L982.3,340.9 L982.3,340.2 L982.3,339.5 L982.3,338.8 L982.3,338.1 L982.3,337.4 L982.3,336.7 L982.3,336.0 L982.3,335.3 L982.3,334.6 L982.3,333.9 L982.3,333.2 L982.3,332.5 L982.3,331.8 L982.3,331.1 L982.3,330.4 L982.3,329.7 L982.3,328.9 L982.3,328.2 L982.3,327.5 L982.3,326.8 L982.3,326.1 L982.3,325.4 L982.3,324.7 L982.3,324.0 L982.3,323.3 L982.3,322.6 L982.3,321.9 L982.3,321.2 L982.3,320.5 L982.3,319.8 L982.3,319.1 L982.3,318.4 L982.3,317.7 L982.3,317.0 L982.3,316.3 L982.3,315.6 L982.3,314.9 L982.3,314.2 L982.3,313.5 L982.3,312.8 L982.3,312.1 L982.3,311.4 L982.3,310.7 L982.3,310.0 L982.3,309.3 L982.3,308.6 L982.3,307.9 L982.3,307.2 L982.3,306.5 L982.3,305.8 L982.3,305.1 L982.3,304.4 L982.3,303.7 L982.3,303.0 L982.3,302.3 L982.3,301.6 L982.3,300.9 L982.3,300.2 L982.3,299.5 L982.3,298.8 L982.3,298.1 L982.4,297.4 L982.4,296.7 L982.4,296.0 L982.4,295.3 L982.5,294.6 L982.5,293.9 L982.5,293.2 L982.5,292.5 L982.6,291.8 L982.6,291.1 L982.7,290.4 L982.7,289.7 L982.7,289.0 L982.8,288.3 L982.8,287.6 L982.9,286.9 L982.9,286.2 L983.0,285.5 L983.0,284.8 L983.1,284.1 L983.1,283.4 L983.2,282.7 L983.3,282.0 L983.3,281.3 L983.4,280.6 L983.5,279.9 L983.5,279.2 L983.6,278.5 L983.7,277.8 L983.8,277.1 L983.9,276.4 L984.0,275.7 L984.0,275.0 L984.1,274.3 L984.2,273.6 L984.3,272.9 L984.4,272.2 L984.5,271.5 L984.6,270.8 L984.7,270.1 L984.9,269.4 L985.0,268.7 L985.1,268.0 L985.2,267.3 L985.3,266.6 L985.5,265.9 L985.6,265.2 L985.7,264.5 L985.9,263.8 L986.0,263.1 L986.2,262.4 L986.3,261.7 L986.5,261.0 L986.7,260.3 L986.8,259.6 L987.0,258.9 L987.2,258.2 L987.4,257.5 L987.6,256.8 L987.8,256.1 L988.0,255.4 L987.4,254.7 L986.9,254.0 L986.4,253.3 L985.9,252.6 L985.5,251.9 L985.1,251.2 L984.7,250.5 L984.4,249.8 L984.1,249.1 L983.8,248.4 L983.5,247.7 L983.3,247.0 L983.1,246.3 L982.9,245.6 L982.7,244.9 L982.6,244.2 L982.5,243.5 L982.4,242.8 L982.3,242.1 L982.3,241.4 L982.3,240.7 L982.3,240.0 L982.3,239.3 L982.3,238.6 L982.3,237.9 L982.3,237.2 L982.3,236.5 L982.3,235.8 L982.3,235.1 L982.3,234.4 L982.3,233.7 L982.3,233.0 L982.3,232.3 L982.3,231.6 L982.3,230.9 L982.3,230.2 L982.3,229.5 L982.3,228.8 L982.3,228.1 L982.3,227.4 L982.3,226.7 L982.3,226.0 L982.3,225.3 L982.3,224.6 L982.3,223.9 L982.3,223.2 L982.3,222.5 L982.3,221.8 L982.3,221.1 L982.3,220.4 L982.3,219.7 L982.3,219.0 L982.3,218.3 L982.3,217.6 L982.3,216.9 L982.3,216.2 L982.3,215.5 L982.3,214.8 L982.3,214.1 L982.3,213.4 L982.3,212.6 L982.3,211.9 L982.3,211.2 L982.3,210.5 L982.3,209.8 L982.3,209.1 L982.3,208.4 L982.4,207.7 L982.5,207.0 L982.6,206.3 L982.8,205.6 L983.0,204.9 L983.2,204.2 L983.4,203.5 L983.7,202.8 L983.9,202.1 L984.2,201.4 L984.6,200.7 L985.0,200.0 L985.4,199.3 L985.9,198.6 L986.4,197.9 L986.9,197.2 L987.5,196.5 L988.1,195.8 L988.4,195.1 L988.4,194.4 L988.4,193.7 L988.5,193.0 L988.6,192.3 L988.8,191.6 L989.0,190.9 L989.2,190.2 L989.5,189.5 L989.8,188.8 L990.2,188.1 L990.6,187.4 L991.0,186.7 L991.5,186.0 L992.1,185.3 L992.7,184.6 L993.3,183.9 L994.0,183.2 L994.8,182.5 L995.7,181.8 L996.6,181.1 L997.6,180.4 L998.6,179.7 L999.8,179.0 L1001.0,178.3 L1002.3,177.6 L1003.6,176.9 L1005.2,176.2 L1006.9,175.5 L1008.8,174.8 L1011.1,174.1 L1013.9,173.4 L1017.7,172.7 L1027.0,172.0Z"/></clipPath><g clip-path="url(#bodyclip)">
<path d="M1065.6,204.5 L1065.6,205.1 L1065.6,205.7 L1065.5,206.3 L1065.4,206.8 L1065.3,207.4 L1065.2,208.0 L1065.0,208.6 L1064.8,209.1 L1064.6,209.7 L1064.3,210.3 L1064.1,210.8 L1063.8,211.4 L1063.4,212.0 L1063.1,212.5 L1062.7,213.0 L1062.3,213.6 L1061.9,214.1 L1061.4,214.6 L1061.0,215.2 L1060.5,215.7 L1060.0,216.2 L1059.4,216.7 L1058.9,217.1 L1058.3,217.6 L1057.7,218.1 L1057.0,218.5 L1056.4,219.0 L1055.7,219.4 L1055.0,219.9 L1054.3,220.3 L1053.6,220.7 L1052.9,221.1 L1052.1,221.5 L1051.3,221.8 L1050.5,222.2 L1049.7,222.6 L1048.9,222.9 L1048.0,223.2 L1047.2,223.5 L1046.3,223.8 L1045.4,224.1 L1044.5,224.4 L1043.6,224.6 L1042.7,224.9 L1041.8,225.1 L1040.9,225.3 L1039.9,225.5 L1038.9,225.7 L1038.0,225.9 L1037.0,226.1 L1036.0,226.2 L1035.0,226.3 L1034.0,226.4 L1033.0,226.5 L1032.0,226.6 L1031.0,226.7 L1030.0,226.7 L1029.0,226.8 L1028.0,226.8 L1027.0,226.8 L1026.0,226.8 L1025.0,226.8 L1024.0,226.7 L1023.0,226.7 L1022.0,226.6 L1021.0,226.5 L1020.0,226.4 L1019.0,226.3 L1018.0,226.2 L1017.0,226.1 L1016.0,225.9 L1015.1,225.7 L1014.1,225.5 L1013.1,225.3 L1012.2,225.1 L1011.3,224.9 L1010.4,224.6 L1009.5,224.4 L1008.6,224.1 L1007.7,223.8 L1006.8,223.5 L1006.0,223.2 L1005.1,222.9 L1004.3,222.6 L1003.5,222.2 L1002.7,221.8 L1001.9,221.5 L1001.1,221.1 L1000.4,220.7 L999.7,220.3 L999.0,219.9 L998.3,219.4 L997.6,219.0 L997.0,218.5 L996.3,218.1 L995.7,217.6 L995.1,217.1 L994.6,216.7 L994.0,216.2 L993.5,215.7 L993.0,215.2 L992.6,214.6 L992.1,214.1 L991.7,213.6 L991.3,213.0 L990.9,212.5 L990.6,212.0 L990.2,211.4 L989.9,210.8 L989.7,210.3 L989.4,209.7 L989.2,209.1 L989.0,208.6 L988.8,208.0 L988.7,207.4 L988.6,206.8 L988.5,206.3 L988.4,205.7 L988.4,205.1 L988.4,204.5" fill="none" stroke="#12380a" stroke-width="1.9"/>
<path d="M1067.9,206.1 L1067.9,206.8 L1067.9,207.4 L1067.8,208.0 L1067.7,208.6 L1067.6,209.2 L1067.4,209.8 L1067.2,210.4 L1067.0,211.1 L1066.8,211.7 L1066.5,212.3 L1066.2,212.9 L1065.9,213.4 L1065.6,214.0 L1065.2,214.6 L1064.8,215.2 L1064.4,215.8 L1063.9,216.3 L1063.5,216.9 L1063.0,217.4 L1062.4,218.0 L1061.9,218.5 L1061.3,219.0 L1060.7,219.5 L1060.1,220.0 L1059.5,220.5 L1058.8,221.0 L1058.1,221.5 L1057.4,221.9 L1056.7,222.4 L1055.9,222.8 L1055.2,223.3 L1054.4,223.7 L1053.6,224.1 L1052.8,224.5 L1051.9,224.9 L1051.1,225.3 L1050.2,225.6 L1049.3,226.0 L1048.4,226.3 L1047.5,226.6 L1046.5,226.9 L1045.6,227.2 L1044.6,227.5 L1043.6,227.7 L1042.7,228.0 L1041.7,228.2 L1040.7,228.4 L1039.6,228.6 L1038.6,228.8 L1037.6,229.0 L1036.6,229.1 L1035.5,229.2 L1034.5,229.4 L1033.4,229.5 L1032.3,229.6 L1031.3,229.6 L1030.2,229.7 L1029.1,229.7 L1028.1,229.8 L1027.0,229.8 L1025.9,229.8 L1024.9,229.7 L1023.8,229.7 L1022.7,229.6 L1021.7,229.6 L1020.6,229.5 L1019.5,229.4 L1018.5,229.2 L1017.4,229.1 L1016.4,229.0 L1015.4,228.8 L1014.4,228.6 L1013.3,228.4 L1012.3,228.2 L1011.3,228.0 L1010.4,227.7 L1009.4,227.5 L1008.4,227.2 L1007.5,226.9 L1006.5,226.6 L1005.6,226.3 L1004.7,226.0 L1003.8,225.6 L1002.9,225.3 L1002.1,224.9 L1001.2,224.5 L1000.4,224.1 L999.6,223.7 L998.8,223.3 L998.1,222.8 L997.3,222.4 L996.6,221.9 L995.9,221.5 L995.2,221.0 L994.5,220.5 L993.9,220.0 L993.3,219.5 L992.7,219.0 L992.1,218.5 L991.6,218.0 L991.0,217.4 L990.5,216.9 L990.1,216.3 L989.6,215.8 L989.2,215.2 L988.8,214.6 L988.4,214.0 L988.1,213.4 L987.8,212.9 L987.5,212.3 L987.2,211.7 L987.0,211.1 L986.8,210.4 L986.6,209.8 L986.4,209.2 L986.3,208.6 L986.2,208.0 L986.1,207.4 L986.1,206.8 L986.1,206.1 L986.1,205.5 L986.1,204.9 L986.2,204.3 L986.3,203.7 L986.4,203.1 L986.6,202.5 L986.8,201.8 L987.0,201.2 L987.2,200.6 L987.5,200.0 L987.8,199.4 L988.1,198.8" fill="none" stroke="#12380a" stroke-width="1.2"/>
<path d="M1065.9,198.8 L1066.2,199.4 L1066.5,200.0 L1066.8,200.6 L1067.0,201.2 L1067.2,201.8 L1067.4,202.5 L1067.6,203.1 L1067.7,203.7 L1067.8,204.3 L1067.9,204.9 L1067.9,205.5 L1067.9,206.1" fill="none" stroke="#12380a" stroke-width="1.2"/>
<path d="M1071.4,208.3 L1071.3,208.9 L1071.3,209.6 L1071.2,210.3 L1071.1,210.9 L1071.0,211.6 L1070.8,212.3 L1070.6,212.9 L1070.4,213.6 L1070.1,214.2 L1069.8,214.9 L1069.5,215.5 L1069.2,216.2 L1068.8,216.8 L1068.4,217.4 L1068.0,218.1 L1067.5,218.7 L1067.0,219.3 L1066.5,219.9 L1066.0,220.5 L1065.4,221.1 L1064.8,221.6 L1064.2,222.2 L1063.6,222.8 L1062.9,223.3 L1062.2,223.8 L1061.5,224.4 L1060.7,224.9 L1060.0,225.4 L1059.2,225.9 L1058.4,226.4 L1057.5,226.8 L1056.7,227.3 L1055.8,227.7 L1054.9,228.2 L1054.0,228.6 L1053.1,229.0 L1052.1,229.4 L1051.2,229.7 L1050.2,230.1 L1049.2,230.4 L1048.2,230.8 L1047.1,231.1 L1046.1,231.4 L1045.0,231.6 L1044.0,231.9 L1042.9,232.2 L1041.8,232.4 L1040.7,232.6 L1039.6,232.8 L1038.5,233.0 L1037.4,233.2 L1036.2,233.3 L1035.1,233.4 L1033.9,233.5 L1032.8,233.6 L1031.6,233.7 L1030.5,233.8 L1029.3,233.8 L1028.2,233.9 L1027.0,233.9 L1025.8,233.9 L1024.7,233.8 L1023.5,233.8 L1022.4,233.7 L1021.2,233.6 L1020.1,233.5 L1018.9,233.4 L1017.8,233.3 L1016.6,233.2 L1015.5,233.0 L1014.4,232.8 L1013.3,232.6 L1012.2,232.4 L1011.1,232.2 L1010.0,231.9 L1009.0,231.6 L1007.9,231.4 L1006.9,231.1 L1005.8,230.8 L1004.8,230.4 L1003.8,230.1 L1002.8,229.7 L1001.9,229.4 L1000.9,229.0 L1000.0,228.6 L999.1,228.2 L998.2,227.7 L997.3,227.3 L996.5,226.8 L995.6,226.4 L994.8,225.9 L994.0,225.4 L993.3,224.9 L992.5,224.4 L991.8,223.8 L991.1,223.3 L990.4,222.8 L989.8,222.2 L989.2,221.6 L988.6,221.1 L988.0,220.5 L987.5,219.9 L987.0,219.3 L986.5,218.7 L986.0,218.1 L985.6,217.4 L985.2,216.8 L984.8,216.2 L984.5,215.5 L984.2,214.9 L983.9,214.2 L983.6,213.6 L983.4,212.9 L983.2,212.3 L983.0,211.6 L982.9,210.9 L982.8,210.3 L982.7,209.6 L982.7,208.9 L982.6,208.3 L982.7,207.6 L982.7,206.9 L982.8,206.3 L982.9,205.6 L983.0,204.9 L983.2,204.3 L983.4,203.6 L983.6,202.9 L983.9,202.3 L984.2,201.6 L984.5,201.0 L984.8,200.4 L985.2,199.7 L985.6,199.1 L986.0,198.5 L986.5,197.9 L987.0,197.3 L987.5,196.7 L988.0,196.1" fill="none" stroke="#12380a" stroke-width="1.8"/>
<path d="M1066.0,196.1 L1066.5,196.7 L1067.0,197.3 L1067.5,197.9 L1068.0,198.5 L1068.4,199.1 L1068.8,199.7 L1069.2,200.4 L1069.5,201.0 L1069.8,201.6 L1070.1,202.3 L1070.4,202.9 L1070.6,203.6 L1070.8,204.3 L1071.0,204.9 L1071.1,205.6 L1071.2,206.3 L1071.3,206.9 L1071.3,207.6 L1071.4,208.3" fill="none" stroke="#12380a" stroke-width="1.8"/>
<path d="M1071.7,240.6 L1071.7,241.3 L1071.6,242.0 L1071.6,242.6 L1071.4,243.3 L1071.3,244.0 L1071.1,244.6 L1070.9,245.3 L1070.7,246.0 L1070.5,246.6 L1070.2,247.3 L1069.9,247.9 L1069.5,248.6 L1069.1,249.2 L1068.7,249.8 L1068.3,250.5 L1067.8,251.1 L1067.3,251.7 L1066.8,252.3 L1066.3,252.9 L1065.7,253.5 L1065.1,254.1 L1064.5,254.6 L1063.8,255.2 L1063.2,255.8 L1062.5,256.3 L1061.7,256.8 L1061.0,257.4 L1060.2,257.9 L1059.4,258.4 L1058.6,258.8 L1057.8,259.3 L1056.9,259.8 L1056.0,260.2 L1055.1,260.6 L1054.2,261.1 L1053.3,261.5 L1052.3,261.9 L1051.3,262.2 L1050.4,262.6 L1049.3,262.9 L1048.3,263.3 L1047.3,263.6 L1046.2,263.9 L1045.2,264.2 L1044.1,264.4 L1043.0,264.7 L1041.9,264.9 L1040.8,265.1 L1039.7,265.3 L1038.6,265.5 L1037.4,265.7 L1036.3,265.8 L1035.1,266.0 L1034.0,266.1 L1032.8,266.2 L1031.7,266.2 L1030.5,266.3 L1029.3,266.4 L1028.2,266.4 L1027.0,266.4 L1025.8,266.4 L1024.7,266.4 L1023.5,266.3 L1022.3,266.2 L1021.2,266.2 L1020.0,266.1 L1018.9,266.0 L1017.7,265.8 L1016.6,265.7 L1015.4,265.5 L1014.3,265.3 L1013.2,265.1 L1012.1,264.9 L1011.0,264.7 L1009.9,264.4 L1008.8,264.2 L1007.8,263.9 L1006.7,263.6 L1005.7,263.3 L1004.7,262.9 L1003.6,262.6 L1002.7,262.2 L1001.7,261.9 L1000.7,261.5 L999.8,261.1 L998.9,260.6 L998.0,260.2 L997.1,259.8 L996.2,259.3 L995.4,258.8 L994.6,258.4 L993.8,257.9 L993.0,257.4 L992.3,256.8 L991.5,256.3 L990.8,255.8 L990.2,255.2 L989.5,254.6 L988.9,254.1 L988.3,253.5 L987.7,252.9 L987.2,252.3 L986.7,251.7 L986.2,251.1 L985.7,250.5 L985.3,249.8 L984.9,249.2 L984.5,248.6 L984.1,247.9 L983.8,247.3 L983.5,246.6 L983.3,246.0 L983.1,245.3 L982.9,244.6 L982.7,244.0 L982.6,243.3 L982.4,242.6 L982.4,242.0 L982.3,241.3 L982.3,240.6" fill="none" stroke="#12380a" stroke-width="1.8"/>
<path d="M1070.3,248.2 L1070.0,248.9 L1069.8,249.5 L1069.4,250.1 L1069.1,250.8 L1068.7,251.4 L1068.3,252.0 L1067.9,252.7 L1067.4,253.3 L1067.0,253.9 L1066.4,254.5 L1065.9,255.1 L1065.3,255.7 L1064.7,256.2 L1064.1,256.8 L1063.5,257.4 L1062.8,257.9 L1062.1,258.4 L1061.4,259.0 L1060.7,259.5 L1059.9,260.0 L1059.1,260.5 L1058.3,260.9 L1057.5,261.4 L1056.6,261.9 L1055.7,262.3 L1054.9,262.7 L1053.9,263.1 L1053.0,263.5 L1052.1,263.9 L1051.1,264.3 L1050.1,264.7 L1049.1,265.0 L1048.1,265.3 L1047.1,265.6 L1046.1,265.9 L1045.0,266.2 L1043.9,266.5 L1042.9,266.7 L1041.8,267.0 L1040.7,267.2 L1039.6,267.4 L1038.5,267.6 L1037.3,267.7 L1036.2,267.9 L1035.1,268.0 L1033.9,268.1 L1032.8,268.2 L1031.6,268.3 L1030.5,268.3 L1029.3,268.4 L1028.2,268.4 L1027.0,268.4 L1025.8,268.4 L1024.7,268.4 L1023.5,268.3 L1022.4,268.3 L1021.2,268.2 L1020.1,268.1 L1018.9,268.0 L1017.8,267.9 L1016.7,267.7 L1015.5,267.6 L1014.4,267.4 L1013.3,267.2 L1012.2,267.0 L1011.1,266.7 L1010.1,266.5 L1009.0,266.2 L1007.9,265.9 L1006.9,265.6 L1005.9,265.3 L1004.9,265.0 L1003.9,264.7 L1002.9,264.3 L1001.9,263.9 L1001.0,263.5 L1000.1,263.1 L999.1,262.7 L998.3,262.3 L997.4,261.9 L996.5,261.4 L995.7,260.9 L994.9,260.5 L994.1,260.0 L993.3,259.5 L992.6,259.0 L991.9,258.4 L991.2,257.9 L990.5,257.4 L989.9,256.8 L989.3,256.2 L988.7,255.7 L988.1,255.1 L987.6,254.5 L987.0,253.9 L986.6,253.3 L986.1,252.7 L985.7,252.0 L985.3,251.4 L984.9,250.8 L984.6,250.1 L984.2,249.5 L984.0,248.9 L983.7,248.2" fill="none" stroke="#12380a" stroke-width="1.3"/>
<path d="M1061.2,260.1 L1060.6,260.6 L1059.9,261.1 L1059.3,261.6 L1058.6,262.1 L1057.9,262.6 L1057.1,263.1 L1056.4,263.5 L1055.6,263.9 L1054.8,264.4 L1054.0,264.8 L1053.1,265.2 L1052.3,265.6 L1051.4,265.9 L1050.5,266.3 L1049.6,266.7 L1048.7,267.0 L1047.8,267.3 L1046.8,267.6 L1045.8,267.9 L1044.9,268.2 L1043.9,268.4 L1042.9,268.7 L1041.9,268.9 L1040.9,269.1 L1039.8,269.3 L1038.8,269.5 L1037.7,269.7 L1036.7,269.9 L1035.6,270.0 L1034.6,270.1 L1033.5,270.2 L1032.4,270.3 L1031.3,270.4 L1030.3,270.4 L1029.2,270.5 L1028.1,270.5 L1027.0,270.5 L1025.9,270.5 L1024.8,270.5 L1023.7,270.4 L1022.7,270.4 L1021.6,270.3 L1020.5,270.2 L1019.4,270.1 L1018.4,270.0 L1017.3,269.9 L1016.3,269.7 L1015.2,269.5 L1014.2,269.3 L1013.1,269.1 L1012.1,268.9 L1011.1,268.7 L1010.1,268.4 L1009.1,268.2 L1008.2,267.9 L1007.2,267.6 L1006.2,267.3 L1005.3,267.0 L1004.4,266.7 L1003.5,266.3 L1002.6,265.9 L1001.7,265.6 L1000.9,265.2 L1000.0,264.8 L999.2,264.4 L998.4,263.9 L997.6,263.5 L996.9,263.1 L996.1,262.6 L995.4,262.1 L994.7,261.6 L994.1,261.1 L993.4,260.6 L992.8,260.1" fill="none" stroke="#12380a" stroke-width="1.2"/>
<path d="M1065.5,256.0 L1065.5,256.5 L1065.4,257.1 L1065.4,257.7 L1065.3,258.3 L1065.2,258.9 L1065.0,259.4 L1064.8,260.0 L1064.6,260.6 L1064.4,261.1 L1064.2,261.7 L1063.9,262.3 L1063.6,262.8 L1063.3,263.4 L1062.9,263.9 L1062.6,264.4 L1062.2,265.0 L1061.7,265.5 L1061.3,266.0 L1060.8,266.5 L1060.3,267.1 L1059.8,267.6 L1059.3,268.0 L1058.7,268.5 L1058.1,269.0 L1057.5,269.5 L1056.9,269.9 L1056.3,270.4 L1055.6,270.8 L1054.9,271.2 L1054.2,271.7 L1053.5,272.1 L1052.7,272.5 L1052.0,272.8 L1051.2,273.2 L1050.4,273.6 L1049.6,273.9 L1048.8,274.3 L1048.0,274.6 L1047.1,274.9 L1046.2,275.2 L1045.4,275.5 L1044.5,275.7 L1043.6,276.0 L1042.7,276.2 L1041.7,276.5 L1040.8,276.7 L1039.8,276.9 L1038.9,277.1 L1037.9,277.2 L1037.0,277.4 L1036.0,277.5 L1035.0,277.7 L1034.0,277.8 L1033.0,277.9 L1032.0,278.0 L1031.0,278.0 L1030.0,278.1 L1029.0,278.1 L1028.0,278.1 L1027.0,278.2 L1026.0,278.1 L1025.0,278.1 L1024.0,278.1 L1023.0,278.0 L1022.0,278.0 L1021.0,277.9 L1020.0,277.8 L1019.0,277.7 L1018.0,277.5 L1017.0,277.4 L1016.1,277.2 L1015.1,277.1 L1014.2,276.9 L1013.2,276.7 L1012.3,276.5 L1011.3,276.2 L1010.4,276.0 L1009.5,275.7 L1008.6,275.5 L1007.8,275.2 L1006.9,274.9 L1006.0,274.6 L1005.2,274.3 L1004.4,273.9 L1003.6,273.6 L1002.8,273.2 L1002.0,272.8 L1001.3,272.5 L1000.5,272.1 L999.8,271.7 L999.1,271.2 L998.4,270.8 L997.7,270.4 L997.1,269.9 L996.5,269.5 L995.9,269.0 L995.3,268.5 L994.7,268.0 L994.2,267.6 L993.7,267.1 L993.2,266.5 L992.7,266.0 L992.3,265.5 L991.8,265.0 L991.4,264.4 L991.1,263.9 L990.7,263.4 L990.4,262.8 L990.1,262.3 L989.8,261.7 L989.6,261.1 L989.4,260.6 L989.2,260.0 L989.0,259.4 L988.8,258.9 L988.7,258.3 L988.6,257.7 L988.6,257.1 L988.5,256.5 L988.5,256.0" fill="none" stroke="#12380a" stroke-width="1.6"/>
<path d="M1071.7,299.2 L1071.7,299.9 L1071.6,300.6 L1071.5,301.2 L1071.4,301.9 L1071.3,302.6 L1071.1,303.3 L1070.9,303.9 L1070.7,304.6 L1070.5,305.2 L1070.2,305.9 L1069.8,306.5 L1069.5,307.2 L1069.1,307.8 L1068.7,308.5 L1068.3,309.1 L1067.8,309.7 L1067.3,310.3 L1066.8,310.9 L1066.3,311.5 L1065.7,312.1 L1065.1,312.7 L1064.5,313.3 L1063.8,313.8 L1063.2,314.4 L1062.5,314.9 L1061.7,315.5 L1061.0,316.0 L1060.2,316.5 L1059.4,317.0 L1058.6,317.5 L1057.8,317.9 L1056.9,318.4 L1056.0,318.8 L1055.1,319.3 L1054.2,319.7 L1053.3,320.1 L1052.3,320.5 L1051.3,320.9 L1050.3,321.2 L1049.3,321.6 L1048.3,321.9 L1047.3,322.2 L1046.2,322.5 L1045.2,322.8 L1044.1,323.0 L1043.0,323.3 L1041.9,323.5 L1040.8,323.7 L1039.7,323.9 L1038.6,324.1 L1037.4,324.3 L1036.3,324.4 L1035.1,324.6 L1034.0,324.7 L1032.8,324.8 L1031.7,324.9 L1030.5,324.9 L1029.3,325.0 L1028.2,325.0 L1027.0,325.0 L1025.8,325.0 L1024.7,325.0 L1023.5,324.9 L1022.3,324.9 L1021.2,324.8 L1020.0,324.7 L1018.9,324.6 L1017.7,324.4 L1016.6,324.3 L1015.4,324.1 L1014.3,323.9 L1013.2,323.7 L1012.1,323.5 L1011.0,323.3 L1009.9,323.0 L1008.8,322.8 L1007.8,322.5 L1006.7,322.2 L1005.7,321.9 L1004.7,321.6 L1003.7,321.2 L1002.7,320.9 L1001.7,320.5 L1000.7,320.1 L999.8,319.7 L998.9,319.3 L998.0,318.8 L997.1,318.4 L996.2,317.9 L995.4,317.5 L994.6,317.0 L993.8,316.5 L993.0,316.0 L992.3,315.5 L991.5,314.9 L990.8,314.4 L990.2,313.8 L989.5,313.3 L988.9,312.7 L988.3,312.1 L987.7,311.5 L987.2,310.9 L986.7,310.3 L986.2,309.7 L985.7,309.1 L985.3,308.5 L984.9,307.8 L984.5,307.2 L984.2,306.5 L983.8,305.9 L983.5,305.2 L983.3,304.6 L983.1,303.9 L982.9,303.3 L982.7,302.6 L982.6,301.9 L982.5,301.2 L982.4,300.6 L982.3,299.9 L982.3,299.2" fill="none" stroke="#12380a" stroke-width="1.5"/>
<path d="M1071.7,383.7 L1071.6,384.3 L1071.6,385.0 L1071.4,385.7 L1071.3,386.4 L1071.1,387.0 L1070.9,387.7 L1070.7,388.4 L1070.5,389.0 L1070.2,389.7 L1069.8,390.3 L1069.5,391.0 L1069.1,391.6 L1068.7,392.2 L1068.3,392.9 L1067.8,393.5 L1067.3,394.1 L1066.8,394.7 L1066.3,395.3 L1065.7,395.9 L1065.1,396.5 L1064.5,397.0 L1063.8,397.6 L1063.2,398.2 L1062.5,398.7 L1061.7,399.2 L1061.0,399.7 L1060.2,400.3 L1059.4,400.7 L1058.6,401.2 L1057.8,401.7 L1056.9,402.2 L1056.0,402.6 L1055.1,403.0 L1054.2,403.5 L1053.3,403.9 L1052.3,404.3 L1051.3,404.6 L1050.3,405.0 L1049.3,405.3 L1048.3,405.7 L1047.3,406.0 L1046.2,406.3 L1045.2,406.6 L1044.1,406.8 L1043.0,407.1 L1041.9,407.3 L1040.8,407.5 L1039.7,407.7 L1038.6,407.9 L1037.4,408.1 L1036.3,408.2 L1035.1,408.4 L1034.0,408.5 L1032.8,408.6 L1031.7,408.6 L1030.5,408.7 L1029.3,408.7 L1028.2,408.8 L1027.0,408.8 L1025.8,408.8 L1024.7,408.7 L1023.5,408.7 L1022.3,408.6 L1021.2,408.6 L1020.0,408.5 L1018.9,408.4 L1017.7,408.2 L1016.6,408.1 L1015.4,407.9 L1014.3,407.7 L1013.2,407.5 L1012.1,407.3 L1011.0,407.1 L1009.9,406.8 L1008.8,406.6 L1007.8,406.3 L1006.7,406.0 L1005.7,405.7 L1004.7,405.3 L1003.7,405.0 L1002.7,404.6 L1001.7,404.3 L1000.7,403.9 L999.8,403.5 L998.9,403.0 L998.0,402.6 L997.1,402.2 L996.2,401.7 L995.4,401.2 L994.6,400.7 L993.8,400.3 L993.0,399.7 L992.3,399.2 L991.5,398.7 L990.8,398.2 L990.2,397.6 L989.5,397.0 L988.9,396.5 L988.3,395.9 L987.7,395.3 L987.2,394.7 L986.7,394.1 L986.2,393.5 L985.7,392.9 L985.3,392.2 L984.9,391.6 L984.5,391.0 L984.2,390.3 L983.8,389.7 L983.5,389.0 L983.3,388.4 L983.1,387.7 L982.9,387.0 L982.7,386.4 L982.6,385.7 L982.4,385.0 L982.4,384.3 L982.3,383.7" fill="none" stroke="#12380a" stroke-width="1.5"/>
</g>
<path d="M1027.0,172.0 L1036.3,172.7 L1040.1,173.4 L1042.9,174.1 L1045.2,174.8 L1047.2,175.5 L1048.9,176.2 L1050.4,176.9 L1051.8,177.6 L1053.0,178.4 L1054.2,179.1 L1055.4,179.8 L1056.5,180.5 L1057.5,181.2 L1058.4,181.9 L1059.2,182.6 L1060.0,183.3 L1060.7,184.0 L1061.4,184.7 L1062.0,185.4 L1062.5,186.1 L1063.0,186.8 L1063.5,187.5 L1063.9,188.2 L1064.2,188.9 L1064.6,189.6 L1064.8,190.3 L1065.1,191.0 L1065.3,191.7 L1065.4,192.4 L1065.5,193.1 L1065.6,193.8 L1065.6,194.5 L1065.6,195.3 L1065.6,196.0 L1065.6,196.7 L1065.6,197.4 L1065.6,198.1 L1065.9,198.8 L1066.3,199.5 L1066.6,200.2 L1066.9,200.9 L1067.2,201.6 L1067.4,202.3 L1067.6,203.0 L1067.7,203.7 L1067.8,204.4 L1067.9,205.1 L1067.9,205.8 L1067.9,206.5 L1067.9,207.2 L1067.8,207.9 L1067.7,208.6 L1067.6,209.3 L1067.4,210.0 L1067.1,210.7 L1066.9,211.5 L1066.6,212.2 L1066.2,212.9 L1065.9,213.6 L1065.4,214.3 L1065.0,215.0 L1064.4,215.7 L1063.9,216.4 L1063.3,217.1 L1062.6,217.8 L1061.9,218.5 L1061.1,219.2 L1060.3,219.9 L1059.4,220.6 L1058.4,221.3 L1057.3,222.0 L1056.2,222.7 L1054.9,223.4 L1053.5,224.1 L1052.0,224.8 L1050.4,225.5 L1048.5,226.2 L1046.4,226.9 L1043.9,227.6 L1040.9,228.4 L1036.9,229.1 L1027.0,229.8 L1027.0,229.8 L1017.1,229.1 L1013.1,228.4 L1010.1,227.6 L1007.6,226.9 L1005.5,226.2 L1003.6,225.5 L1002.0,224.8 L1000.5,224.1 L999.1,223.4 L997.8,222.7 L996.7,222.0 L995.6,221.3 L994.6,220.6 L993.7,219.9 L992.9,219.2 L992.1,218.5 L991.4,217.8 L990.7,217.1 L990.1,216.4 L989.6,215.7 L989.0,215.0 L988.6,214.3 L988.1,213.6 L987.8,212.9 L987.4,212.2 L987.1,211.5 L986.9,210.7 L986.6,210.0 L986.4,209.3 L986.3,208.6 L986.2,207.9 L986.1,207.2 L986.1,206.5 L986.1,205.8 L986.1,205.1 L986.2,204.4 L986.3,203.7 L986.4,203.0 L986.6,202.3 L986.8,201.6 L987.1,200.9 L987.4,200.2 L987.7,199.5 L988.1,198.8 L988.4,198.1 L988.4,197.4 L988.4,196.7 L988.4,196.0 L988.4,195.3 L988.4,194.5 L988.4,193.8 L988.5,193.1 L988.6,192.4 L988.7,191.7 L988.9,191.0 L989.2,190.3 L989.4,189.6 L989.8,188.9 L990.1,188.2 L990.5,187.5 L991.0,186.8 L991.5,186.1 L992.0,185.4 L992.6,184.7 L993.3,184.0 L994.0,183.3 L994.8,182.6 L995.6,181.9 L996.5,181.2 L997.5,180.5 L998.6,179.8 L999.8,179.1 L1001.0,178.4 L1002.2,177.6 L1003.6,176.9 L1005.1,176.2 L1006.8,175.5 L1008.8,174.8 L1011.1,174.1 L1013.9,173.4 L1017.7,172.7 L1027.0,172.0Z" fill="none" stroke="#12380a" stroke-width="1.1"/>
<ellipse cx="1027.0" cy="193.5" rx="38.5" ry="22.3" fill="url(#gface)" stroke="#12380a" stroke-width="1.4"/>
<ellipse cx="1027.0" cy="192.6" rx="35.2" ry="20.6" fill="url(#gwall)" stroke="#12380a" stroke-width="1.2"/>
<g clip-path="url(#rimclip)"><ellipse cx="1027.0" cy="203.4" rx="35.2" ry="20.3" fill="url(#gin)" stroke="#12380a" stroke-width="1.4"/></g>
<text x="428.90" y="222.80" font-size="14.4" textLength="48.60" lengthAdjust="spacingAndGlyphs" fill="#111">Ø75.00</text>
<path d="M486.50,217.70 L502.60,217.70 L566.50,264.00" fill="none" stroke="#111" stroke-width="0.9"/>
<polygon points="566.50,264.00 552.60,256.77 555.30,253.04" fill="#000"/>
<text x="441.40" y="423.50" font-size="14.4" textLength="68.40" lengthAdjust="spacingAndGlyphs" fill="#111">M65x4.00</text>
<path d="M518.60,418.00 L533.50,418.00 L564.20,452.00" fill="none" stroke="#111" stroke-width="0.9"/>
<polygon points="564.20,452.00 552.11,442.04 555.52,438.95" fill="#000"/>
<text x="671.80" y="432.30" font-size="14.4" textLength="91.40" lengthAdjust="spacingAndGlyphs" fill="#111">2.356 X 45.0°</text>
<path d="M663.40,426.40 L654.00,426.40 L640.90,446.10" fill="none" stroke="#111" stroke-width="0.9"/>
<text x="448.00" y="522.50" font-size="14.4" textLength="46.80" lengthAdjust="spacingAndGlyphs" fill="#111">R10.00</text>
<path d="M503.60,517.30 L564.60,517.30" fill="none" stroke="#111" stroke-width="0.9"/>
<polygon points="564.60,517.30 549.10,519.60 549.10,515.00" fill="#000"/>
<text x="446.70" y="737.80" font-size="14.4" textLength="46.60" lengthAdjust="spacingAndGlyphs" fill="#111">R10.00</text>
<path d="M501.00,732.20 L517.00,732.20 L561.70,687.20" fill="none" stroke="#111" stroke-width="0.9"/>
<polygon points="561.70,687.20 552.41,699.82 549.14,696.58" fill="#000"/>
<text x="673.00" y="572.00" font-size="14.4" textLength="46.70" lengthAdjust="spacingAndGlyphs" fill="#111">205.00</text>
<line x1="645.60" y1="444.50" x2="703.80" y2="444.50" stroke="#111" stroke-width="0.9"/>
<line x1="642.70" y1="689.20" x2="704.00" y2="689.20" stroke="#111" stroke-width="0.9"/>
<line x1="696.40" y1="452.00" x2="696.40" y2="553.00" stroke="#111" stroke-width="0.9"/>
<line x1="696.40" y1="581.40" x2="696.40" y2="682.00" stroke="#111" stroke-width="0.9"/>
<polygon points="696.40,444.70 698.70,460.20 694.10,460.20" fill="#000"/>
<polygon points="696.40,689.00 694.10,673.50 698.70,673.50" fill="#000"/>
<rect x="729.40" y="697.60" width="553.20" height="136.50" stroke="#2a2a2a" stroke-width="1.35" fill="none"/>
<line x1="729.40" y1="761.40" x2="838.90" y2="761.40" stroke="#2a2a2a" stroke-width="1.35" fill="none"/>
<line x1="729.40" y1="777.30" x2="838.90" y2="777.30" stroke="#2a2a2a" stroke-width="1.35" fill="none"/>
<line x1="729.40" y1="796.00" x2="838.90" y2="796.00" stroke="#2a2a2a" stroke-width="1.35" fill="none"/>
<line x1="729.40" y1="806.80" x2="838.90" y2="806.80" stroke="#2a2a2a" stroke-width="1.35" fill="none"/>
<line x1="838.90" y1="697.60" x2="838.90" y2="834.10" stroke="#2a2a2a" stroke-width="1.35" fill="none"/>
<line x1="838.90" y1="713.60" x2="1002.80" y2="713.60" stroke="#2a2a2a" stroke-width="1.35" fill="none"/>
<line x1="838.90" y1="730.20" x2="1002.80" y2="730.20" stroke="#2a2a2a" stroke-width="1.35" fill="none"/>
<line x1="838.90" y1="746.80" x2="1002.80" y2="746.80" stroke="#2a2a2a" stroke-width="1.35" fill="none"/>
<line x1="838.90" y1="763.00" x2="1002.80" y2="763.00" stroke="#2a2a2a" stroke-width="1.35" fill="none"/>
<line x1="838.90" y1="779.40" x2="1002.80" y2="779.40" stroke="#2a2a2a" stroke-width="1.35" fill="none"/>
<line x1="838.90" y1="796.00" x2="1002.80" y2="796.00" stroke="#2a2a2a" stroke-width="1.35" fill="none"/>
<line x1="893.60" y1="697.60" x2="893.60" y2="796.00" stroke="#2a2a2a" stroke-width="1.35" fill="none"/>
<line x1="961.90" y1="697.60" x2="961.90" y2="796.00" stroke="#2a2a2a" stroke-width="1.35" fill="none"/>
<line x1="920.80" y1="796.00" x2="920.80" y2="834.10" stroke="#2a2a2a" stroke-width="1.35" fill="none"/>
<line x1="1002.80" y1="697.60" x2="1002.80" y2="834.10" stroke="#2a2a2a" stroke-width="1.35" fill="none"/>
<line x1="1002.80" y1="731.60" x2="1282.60" y2="731.60" stroke="#2a2a2a" stroke-width="1.35" fill="none"/>
<line x1="1002.80" y1="788.80" x2="1282.60" y2="788.80" stroke="#2a2a2a" stroke-width="1.35" fill="none"/>
<line x1="1002.80" y1="816.00" x2="1282.60" y2="816.00" stroke="#2a2a2a" stroke-width="1.35" fill="none"/>
<line x1="1036.60" y1="788.80" x2="1036.60" y2="816.00" stroke="#2a2a2a" stroke-width="1.35" fill="none"/>
<line x1="1255.30" y1="788.80" x2="1255.30" y2="816.00" stroke="#2a2a2a" stroke-width="1.35" fill="none"/>
<line x1="1062.50" y1="816.00" x2="1062.50" y2="834.10" stroke="#2a2a2a" stroke-width="1.35" fill="none"/>
<line x1="1187.20" y1="816.00" x2="1187.20" y2="834.10" stroke="#2a2a2a" stroke-width="1.35" fill="none"/>
<rect x="1133.40" y="734.20" width="18.80" height="52.40" fill="#dedede"/>
<rect x="1134.60" y="790.80" width="23.20" height="23.00" fill="#dedede"/>
<rect x="1013.90" y="790.80" width="11.60" height="23.00" fill="#dedede"/>
<rect x="1267.90" y="790.80" width="5.20" height="23.00" fill="#dedede"/>
<rect x="1027.80" y="818.40" width="15.60" height="13.20" fill="#dedede"/>
<rect x="1224.00" y="818.40" width="6.00" height="13.20" fill="#dedede"/>
<rect x="1246.00" y="818.40" width="6.00" height="13.20" fill="#dedede"/>
<rect x="898.60" y="719.60" width="57.80" height="5.40" fill="#dedede"/>
<rect x="967.80" y="719.60" width="28.60" height="5.40" fill="#dedede"/>
<rect x="924.60" y="753.20" width="6.40" height="4.60" fill="#dedede"/>
<rect x="979.30" y="753.20" width="6.40" height="4.60" fill="#dedede"/>
<text x="731.50" y="705.80" font-size="5.3" textLength="91.00" lengthAdjust="spacingAndGlyphs" fill="#222">UNLESS OTHERWISE SPECIFIED,</text>
<text x="731.50" y="713.00" font-size="5.3" textLength="82.70" lengthAdjust="spacingAndGlyphs" fill="#222">DIMENSIONS ARE IN INCHES</text>
<text x="739.40" y="722.00" font-size="5.3" textLength="24.50" lengthAdjust="spacingAndGlyphs" fill="#222">.XX = ±.0-</text>
<text x="736.30" y="729.70" font-size="5.3" textLength="31.50" lengthAdjust="spacingAndGlyphs" fill="#222">.XXX = ±.00-</text>
<text x="732.40" y="737.10" font-size="5.3" textLength="39.30" lengthAdjust="spacingAndGlyphs" fill="#222">.XXXX = ±.000-</text>
<text x="786.20" y="727.90" font-size="4.9" textLength="38.90" lengthAdjust="spacingAndGlyphs" fill="#222">ANGULAR = ± °</text>
<text x="786.20" y="734.50" font-size="4.9" textLength="41.50" lengthAdjust="spacingAndGlyphs" fill="#222">FRACTIONAL = ±</text>
<text x="731.90" y="748.50" font-size="5.3" textLength="46.80" lengthAdjust="spacingAndGlyphs" fill="#222">SURFACE FINISH</text>
<path d="M778.3,750.7 L781.8,755 L787.5,745.4 H793.6" fill="none" stroke="#111" stroke-width="0.8"/>
<text x="736.70" y="772.40" font-size="8" textLength="95.10" lengthAdjust="spacingAndGlyphs" fill="#222">DO NOT SCALE DRAWING</text>
<text x="740.90" y="785.50" font-size="5.2" textLength="86.20" lengthAdjust="spacingAndGlyphs" fill="#222">BREAK ALL SHARP EDGES AND</text>
<text x="761.30" y="792.60" font-size="5.2" textLength="45.60" lengthAdjust="spacingAndGlyphs" fill="#222">REMOVE BURRS</text>
<text x="746.50" y="804.00" font-size="5.2" textLength="76.20" lengthAdjust="spacingAndGlyphs" fill="#222">THIRD ANGLE PROJECTION</text>
<circle cx="772" cy="820.4" r="9.8" fill="none" stroke="#111" stroke-width="0.9"/><circle cx="772" cy="820.4" r="5" fill="none" stroke="#111" stroke-width="0.9"/>
<line x1="760.00" y1="820.40" x2="783.20" y2="820.40" stroke="#111" stroke-width="0.7"/>
<line x1="772.00" y1="808.40" x2="772.00" y2="834.00" stroke="#111" stroke-width="0.7"/>
<path d="M786.2,815.1 L806.7,810.7 V830.5 L786.2,825.3 Z" fill="none" stroke="#111" stroke-width="0.9"/>
<line x1="785.00" y1="820.40" x2="808.50" y2="820.40" stroke="#111" stroke-width="0.7" stroke-dasharray="7 1.5 2 1.5"/>
<text x="840.90" y="804.00" font-size="5.2" textLength="27.50" lengthAdjust="spacingAndGlyphs" fill="#222">MATERIAL</text>
<text x="922.80" y="804.00" font-size="5.2" textLength="19.00" lengthAdjust="spacingAndGlyphs" fill="#222">FINISH</text>
<text x="896.00" y="706.10" font-size="5.2" textLength="16.00" lengthAdjust="spacingAndGlyphs" fill="#222">NAME</text>
<text x="975.00" y="706.10" font-size="5.2" textLength="14.30" lengthAdjust="spacingAndGlyphs" fill="#222">DATE</text>
<text x="841.30" y="722.20" font-size="5.2" textLength="21.30" lengthAdjust="spacingAndGlyphs" fill="#222">DRAWN</text>
<text x="841.30" y="738.70" font-size="5.2" textLength="26.40" lengthAdjust="spacingAndGlyphs" fill="#222">CHECKED</text>
<text x="841.30" y="755.00" font-size="5.2" textLength="30.80" lengthAdjust="spacingAndGlyphs" fill="#222">APPROVED</text>
<text x="899.20" y="724.20" font-size="4.3" textLength="56.60" lengthAdjust="spacingAndGlyphs" fill="#222">ONSHAPE INSTRUCTOR</text>
<text x="968.30" y="724.20" font-size="4.3" textLength="27.60" lengthAdjust="spacingAndGlyphs" fill="#222">07/26/2024</text>
<line x1="925.30" y1="754.60" x2="930.30" y2="754.60" stroke="#777" stroke-width="0.6"/>
<line x1="925.30" y1="756.40" x2="930.30" y2="756.40" stroke="#777" stroke-width="0.6"/>
<line x1="980.00" y1="754.60" x2="985.00" y2="754.60" stroke="#777" stroke-width="0.6"/>
<line x1="980.00" y1="756.40" x2="985.00" y2="756.40" stroke="#777" stroke-width="0.6"/>
<text x="1005.90" y="740.30" font-size="5.2" textLength="14.00" lengthAdjust="spacingAndGlyphs" fill="#222">TITLE</text>
<line x1="1134.10" y1="744.00" x2="1152.00" y2="744.00" stroke="#111" stroke-width="1.5" stroke-dasharray="3.6 1"/>
<line x1="1134.10" y1="761.30" x2="1152.00" y2="761.30" stroke="#111" stroke-width="1.5" stroke-dasharray="3.6 1"/>
<line x1="1134.10" y1="778.50" x2="1152.00" y2="778.50" stroke="#111" stroke-width="1.5" stroke-dasharray="3.6 1"/>
<line x1="1135.60" y1="804.40" x2="1157.40" y2="804.40" stroke="#111" stroke-width="1.7" stroke-dasharray="4.6 1.1"/>
<line x1="1268.40" y1="804.40" x2="1272.90" y2="804.40" stroke="#111" stroke-width="1.7"/>
<text x="1005.30" y="795.60" font-size="4.6" textLength="8.10" lengthAdjust="spacingAndGlyphs" fill="#222">SIZE</text>
<text x="1039.00" y="795.60" font-size="4.6" textLength="20.70" lengthAdjust="spacingAndGlyphs" fill="#222">DWG NO.</text>
<text x="1257.10" y="795.60" font-size="4.6" textLength="8.90" lengthAdjust="spacingAndGlyphs" fill="#222">REV.</text>
<text x="1014.70" y="809.00" font-size="16.5" textLength="10.30" lengthAdjust="spacingAndGlyphs" fill="#222">A</text>
<text x="1005.30" y="823.10" font-size="4.6" textLength="13.10" lengthAdjust="spacingAndGlyphs" fill="#222">SCALE</text>
<text x="1064.80" y="823.10" font-size="4.6" textLength="18.30" lengthAdjust="spacingAndGlyphs" fill="#222">WEIGHT</text>
<text x="1189.10" y="823.10" font-size="4.6" textLength="14.00" lengthAdjust="spacingAndGlyphs" fill="#222">SHEET</text>
<text x="1028.80" y="829.70" font-size="12" textLength="14.00" lengthAdjust="spacingAndGlyphs" fill="#222">1:3</text>
<text x="1224.70" y="829.70" font-size="12" textLength="26.80" lengthAdjust="spacingAndGlyphs" fill="#222">1 of 1</text>
</svg>
<svg id="ui" width="1600" height="900" viewBox="0 0 1600 900" font-family='"Liberation Sans",sans-serif'>
<g id="hdr"><g transform="translate(4.0,7.8) scale(1.0)" fill="none" stroke-linejoin="miter"><path d="M1.5,9.2 V5 L7.8,1.4 L9.4,2.3" stroke="#55a942" stroke-width="2.9"/><path d="M10.9,3.9 L14.1,5.6 V12.2 L12.9,12.9" stroke="#66b852" stroke-width="2.9"/><path d="M1.5,11 V12.4 L7.8,16 L11.2,14.1" stroke="#4a9a37" stroke-width="2.9"/><path d="M7.9,5.6 L10.6,7.1 V10.3 L7.9,11.8 L5.2,10.3 V7.1Z" stroke="#555" stroke-width="1.05" stroke-linejoin="round"/></g>
<text x="25.90" y="19.90" font-size="13.3" textLength="56.20" lengthAdjust="spacingAndGlyphs" fill="#6e6e6e">onshape</text>
<rect x="94.10" y="11.20" width="13.50" height="2.10" fill="#1e1e1e"/>
<rect x="94.10" y="16.05" width="13.50" height="2.10" fill="#1e1e1e"/>
<rect x="94.10" y="20.95" width="13.50" height="2.10" fill="#1e1e1e"/>
<text x="118.40" y="23.60" font-size="17.6" textLength="189.30" lengthAdjust="spacingAndGlyphs" font-weight="700" fill="#222">Water Bottle and Cage</text>
<text x="315.60" y="23.40" font-size="13.4" textLength="27.30" lengthAdjust="spacingAndGlyphs" fill="#9a9a9a">Main</text>
<g transform="translate(358.2,17.4) rotate(-45)" fill="none" stroke="#333" stroke-width="1.5"><rect x="-7.2" y="-2.3" width="8.2" height="4.6" rx="2.3"/><rect x="-1" y="-2.3" width="8.2" height="4.6" rx="2.3"/></g>
<text x="1258.00" y="22.60" font-size="16" textLength="5.40" lengthAdjust="spacingAndGlyphs" font-weight="700" fill="#484848">{</text>
<text x="1269.60" y="22.60" font-size="16" textLength="5.40" lengthAdjust="spacingAndGlyphs" font-weight="700" fill="#484848">}</text>
<path d="M1262.8,16.6 L1265.6,19.6 L1270.2,12.8" fill="none" stroke="#484848" stroke-width="1.9"/>
<rect x="1287.40" y="10.60" width="12.00" height="13.70" rx="1.5" fill="none" stroke="#505050" stroke-width="1.5"/>
<line x1="1293.40" y1="14.20" x2="1297.40" y2="14.20" stroke="#505050" stroke-width="1.4"/>
<path d="M1289.2,14.2 l1,1 l1.8,-2.2" fill="none" stroke="#444" stroke-width="0.8"/>
<line x1="1293.40" y1="17.50" x2="1297.40" y2="17.50" stroke="#505050" stroke-width="1.4"/>
<path d="M1289.2,17.5 l1,1 l1.8,-2.2" fill="none" stroke="#444" stroke-width="0.8"/>
<line x1="1293.40" y1="20.80" x2="1297.40" y2="20.80" stroke="#505050" stroke-width="1.4"/>
<path d="M1289.2,20.8 l1,1 l1.8,-2.2" fill="none" stroke="#444" stroke-width="0.8"/>
<rect x="1313.20" y="11.20" width="5.20" height="5.20" rx="0.6" fill="none" stroke="#505050" stroke-width="1.5"/>
<rect x="1313.20" y="19.00" width="5.20" height="5.20" rx="0.6" fill="none" stroke="#505050" stroke-width="1.5"/>
<rect x="1321.00" y="19.00" width="5.20" height="5.20" rx="0.6" fill="none" stroke="#505050" stroke-width="1.5"/>
<path d="M1323.9,10.4 v6.8 M1320.5,13.8 h6.8" stroke="#505050" stroke-width="1.6" fill="none"/>
<path d="M1346.8,9.8 c-4,0 -6.6,2.7 -6.6,6 c0,2 0.8,3.3 1.9,4.4 v4.2 h6.3 v-2 h1.9 c0.9,0 1.4,-0.6 1.4,-1.4 v-2.2 l1.6,-0.6 l-1.7,-3 c-0.2,-3.2 -2.2,-5.4 -4.8,-5.4z" fill="#555"/>
<circle cx="1345" cy="15.8" r="1.7" fill="#fafafa"/><circle cx="1348.8" cy="13.2" r="1.2" fill="#fafafa"/>
<rect x="1363.20" y="2.70" width="49.00" height="27.20" rx="4.5" fill="#1b56b4"/>
<text x="1372.90" y="21.10" font-size="12.9" textLength="30.00" lengthAdjust="spacingAndGlyphs" font-weight="700" fill="#fff">Share</text>
<circle cx="1428.8" cy="17.1" r="7" fill="#555"/>
<text x="1428.80" y="21.20" font-size="11.6" font-weight="700" fill="#fff" text-anchor="middle">?</text>
<path d="M1443.9,15.6 h5.6 l-2.8,3.1z" fill="#222"/>
<g transform="translate(1461.2,8.0) scale(1.1)" fill="none" stroke-linejoin="miter"><path d="M1.5,9.2 V5 L7.8,1.4 L9.4,2.3" stroke="#55a942" stroke-width="2.9"/><path d="M10.9,3.9 L14.1,5.6 V12.2 L12.9,12.9" stroke="#66b852" stroke-width="2.9"/><path d="M1.5,11 V12.4 L7.8,16 L11.2,14.1" stroke="#4a9a37" stroke-width="2.9"/><path d="M7.9,5.6 L10.6,7.1 V10.3 L7.9,11.8 L5.2,10.3 V7.1Z" stroke="#555" stroke-width="1.05" stroke-linejoin="round"/></g>
<text x="1484.80" y="21.40" font-size="13.4" textLength="97.20" lengthAdjust="spacingAndGlyphs" fill="#444">Onshape Instructor</text>
<path d="M1588.6,15.6 h5.8 l-2.9,3.2z" fill="#222"/></g>
<g id="tb"><path d="M48.8,42.8 L43.7,47.5 L48.8,52.2 V49.4 C51.6,49.3 53.2,50.8 53.5,54.6 C55.6,50.2 53.8,45.7 48.8,45.5Z" fill="#1f1f1f"/>
<path d="M76.2,42.8 L81.3,47.5 L76.2,52.2 V49.4 C73.4,49.3 71.8,50.8 71.5,54.6 C69.4,50.2 71.2,45.7 76.2,45.5Z" fill="#c6c6c6"/>
<line x1="95.60" y1="40.80" x2="95.60" y2="59.00" stroke="#cfcfcf" stroke-width="1.3"/>
<defs><radialGradient id="yg"><stop offset="0" stop-color="#fbeeb2"/><stop offset="0.5" stop-color="#fcf0bb"/><stop offset="0.62" stop-color="#fdf6d6"/><stop offset="1" stop-color="#ffffff"/></radialGradient></defs>
<circle cx="115.9" cy="49.2" r="10.4" fill="url(#yg)"/><path d="M113.3,53.7 A5.2,5.2 0 1 1 118.7,53.6" fill="none" stroke="#ddd3a0" stroke-width="1.3"/><path d="M118.3,50.6 v3.6 h3" fill="none" stroke="#ddd3a0" stroke-width="1"/>
<line x1="135.60" y1="40.80" x2="135.60" y2="59.00" stroke="#cfcfcf" stroke-width="1.3"/>
<path d="M150.2,42.7 H147.7 V56.3 H163.4 V42.7 H158" fill="none" stroke="#2b2b2b" stroke-width="1.35" stroke-linejoin="round"/>
<circle cx="155.4" cy="50.6" r="3.5" fill="none" stroke="#2b2b2b" stroke-width="1.15"/><path d="M155.4,50.8 v3.3 M155.4,50.8 l-2.7,-1.9 M155.4,50.8 l2.7,-1.9" stroke="#2b2b2b" stroke-width="1" fill="none"/>
<path d="M150.4,41 h2.6 c2.2,0 3.4,1.2 3.4,3.2" fill="none" stroke="#2b2b2b" stroke-width="1.5"/>
<path d="M153.4,43.6 h6 l-3,3.4z" fill="#2b2b2b"/>
<rect x="159.60" y="52.90" width="3.80" height="3.40" fill="#fff" stroke="#2b2b2b" stroke-width="1.1"/>
<path d="M175.7,42.4 H189.4 V46.3 H175.7Z M183.4,42.4 V46.3 M175.7,49.3 H183.4 V52.9 H189.4 V56.3 H175.7Z" fill="none" stroke="#2b2b2b" stroke-width="1.35" stroke-linejoin="round"/>
<path d="M202,48.6 L209.6,56.2 H202Z" fill="none" stroke="#2b2b2b" stroke-width="1.35" stroke-linejoin="round"/>
<path d="M209.5,42.2 L216.6,48.6 L213.8,51.2 L206.7,44.8Z" fill="none" stroke="#2b2b2b" stroke-width="1.35" stroke-linejoin="round"/>
<line x1="206.20" y1="52.20" x2="210.40" y2="47.80" stroke="#5b8fc7" stroke-width="1.1" stroke-dasharray="1.6 1"/>
<path d="M238.4,43.6 H237 Q235.6,43.6 235.6,45 V46.4 Q235.6,47.6 234.6,48.4 Q233.5,49.3 233.5,50.6 V53 Q233.5,54.7 235.2,54.7 H236.4" fill="none" stroke="#2b2b2b" stroke-width="1.35" stroke-dasharray="3.6 0.9"/>
<path d="M237.4,41.7 l2.8,1.9 l-2.8,1.9z M235.6,52.8 l2.8,1.9 l-2.8,1.9z" fill="#2b2b2b"/>
<path d="M262.4,43.6 H260 C258.6,43.6 258.5,44.8 258.5,46 V50" fill="none" stroke="#2b2b2b" stroke-width="1.2" stroke-dasharray="2.6 1"/>
<path d="M261.6,41.7 l2.8,1.9 l-2.8,1.9z" fill="#2b2b2b"/>
<path d="M258,50 L262.2,53.6 L258,56.2Z" fill="#a9bdd8"/>
<line x1="261.00" y1="54.60" x2="265.40" y2="51.20" stroke="#2b2b2b" stroke-width="1.2"/>
<circle cx="266" cy="50.8" r="1.4" fill="#2b2b2b"/>
<clipPath id="sv"><path d="M281.8,41.8 H296.6 V46.6 L289.2,52.4 L281.8,46.6Z"/></clipPath>
<g clip-path="url(#sv)" stroke="#2b2b2b" stroke-width="1"><line x1="276.00" y1="54.00" x2="288.00" y2="40.00" /><line x1="278.30" y1="54.00" x2="290.30" y2="40.00" /><line x1="280.60" y1="54.00" x2="292.60" y2="40.00" /><line x1="282.90" y1="54.00" x2="294.90" y2="40.00" /><line x1="285.20" y1="54.00" x2="297.20" y2="40.00" /><line x1="287.50" y1="54.00" x2="299.50" y2="40.00" /><line x1="289.80" y1="54.00" x2="301.80" y2="40.00" /><line x1="292.10" y1="54.00" x2="304.10" y2="40.00" /><line x1="294.40" y1="54.00" x2="306.40" y2="40.00" /><line x1="296.70" y1="54.00" x2="308.70" y2="40.00" /></g>
<rect x="281.80" y="41.80" width="14.80" height="14.50" fill="none" stroke="#2b2b2b" stroke-width="1.35" stroke-linejoin="round"/>
<path d="M281.8,46.6 L289.2,52.4 L296.6,46.6" fill="none" stroke="#2b2b2b" stroke-width="1.05"/>
<path d="M286.9,41.8 V46.4 c0,1.4 4.6,1.4 4.6,0 V41.8" fill="#fff" stroke="#2b2b2b" stroke-width="1"/>
<path d="M321.6,45.6 A6.9,6.9 0 1 1 318.4,42.9" fill="none" stroke="#5b86b2" stroke-width="1.15"/>
<path d="M309.6,47.2 h3 c0.6,0 0.8,0.2 0.8,0.8 v1.8 c0,0.6 0.2,0.8 0.8,0.8 h1.8 c0.6,0 0.8,0.2 0.8,0.8 v1.6 c0,0.6 0.2,0.8 0.8,0.8 h2.2 v1.6" fill="none" stroke="#1d3a66" stroke-width="1.3"/>
<text x="320.60" y="47.40" font-size="7.2" font-weight="700" fill="#222" text-anchor="middle">A</text>
<path d="M340,45 H335.4 V52.2 H340 M345.4,45 H350 V52.2 H345.4" fill="none" stroke="#6f9bc8" stroke-width="1.15"/>
<path d="M339.6,42.4 c2.2,2.2 -1.4,4.6 0.8,6.8 s-1.6,4.6 0.6,7 M343.8,42.4 c2.2,2.2 -1.4,4.6 0.8,6.8 s-1.6,4.6 0.6,7" fill="none" stroke="#1d3a66" stroke-width="1.15"/>
<path d="M365.3,42.3 V53.7 H375.9" fill="none" stroke="#1c1c2a" stroke-width="1.9"/>
<path d="M363,45 H373.5 V55.6" fill="none" stroke="#1f4f96" stroke-width="1.9"/>
<line x1="389.40" y1="40.80" x2="389.40" y2="59.00" stroke="#cfcfcf" stroke-width="1.3"/>
<path d="M403.6,47.4 c2,0.2 3.6,0.8 5,2 c2,1.6 3.2,3.8 3.8,6" fill="none" stroke="#3b6ea8" stroke-width="1.15"/>
<path d="M417.4,45.4 h-2.6 l-5.2,4.8" fill="none" stroke="#2b2b2b" stroke-width="1.15"/>
<path d="M408.6,51.2 l1.2,-3.6 l2.6,2.8z" fill="#2b2b2b"/>
<path d="M425.8,47.6 h5.6 l-2.8,3.4z" fill="#1d3a66"/>
<line x1="442.00" y1="47.00" x2="442.00" y2="54.00" stroke="#2b2b2b" stroke-width="1.1" stroke-dasharray="3.2 1"/>
<line x1="448.40" y1="47.00" x2="448.40" y2="54.00" stroke="#2b2b2b" stroke-width="1.1" stroke-dasharray="3.2 1"/>
<line x1="454.80" y1="47.00" x2="454.80" y2="54.00" stroke="#2b2b2b" stroke-width="1.1" stroke-dasharray="3.2 1"/>
<path d="M441.7,54 V56.4 H447.8 L449,54.6 H454.8" fill="none" stroke="#3b6ea8" stroke-width="1.15"/>
<text x="442.00" y="45.40" font-size="5.2" font-weight="700" fill="#222" text-anchor="middle">0</text>
<text x="448.40" y="45.40" font-size="5.2" font-weight="700" fill="#222" text-anchor="middle">1</text>
<text x="454.80" y="45.40" font-size="5.2" font-weight="700" fill="#222" text-anchor="middle">2</text>
<circle cx="470.2" cy="49.4" r="3.1" fill="none" stroke="#2b2b2b" stroke-width="1.15"/><path d="M466.9,53.2 l6.8,-7.6" stroke="#2b2b2b" stroke-width="1.1"/>
<path d="M475.2,45.5 h7.4 M478.9,45.5 v7.2 M476.3,50.2 l2.6,2.7 l2.6,-2.7" fill="none" stroke="#2b2b2b" stroke-width="1.15"/>
<line x1="495.00" y1="40.80" x2="495.00" y2="59.00" stroke="#cfcfcf" stroke-width="1.3"/>
<rect x="508.50" y="41.50" width="13.00" height="11.30" fill="none" stroke="#2b2b2b" stroke-width="1.35" stroke-linejoin="round"/>
<text x="515.00" y="51.20" font-size="10.2" textLength="8.00" lengthAdjust="spacingAndGlyphs" font-weight="700" fill="#222" text-anchor="middle">A</text>
<line x1="515.00" y1="52.80" x2="515.00" y2="55.00" stroke="#2b2b2b" stroke-width="1.1"/>
<path d="M511.8,57.4 h6.4 l-3.2,-2.8z" fill="#2b2b2b"/>
<rect x="533.60" y="42.80" width="16.20" height="11.60" fill="none" stroke="#2b2b2b" stroke-width="1.35" stroke-linejoin="round"/>
<line x1="545.40" y1="42.80" x2="545.40" y2="54.40" stroke="#2b2b2b" stroke-width="1.1"/>
<circle cx="539.4" cy="48.6" r="3.1" fill="none" stroke="#2b2b2b" stroke-width="1.05"/><path d="M535,48.6 h8.8 M539.4,44.2 v8.8" stroke="#2b2b2b" stroke-width="0.95"/>
<circle cx="547.6" cy="45.6" r="0.75" fill="#2b2b2b"/>
<circle cx="547.6" cy="48.6" r="0.75" fill="#2b2b2b"/>
<circle cx="547.6" cy="51.6" r="0.75" fill="#2b2b2b"/>
<path d="M562.7,49.6 L566.5,55.8 L575,42.5" fill="none" stroke="#2b2b2b" stroke-width="1.2"/>
<path d="M587.9,45 L592.2,49.6 M587.9,52.6 L594.2,44.6 M594.2,44.6 l2.4,3.2 h-4.4 M592.4,48 H597.2 C599.4,48 600.2,51.4 601.2,54.2" fill="none" stroke="#2b2b2b" stroke-width="1.1" stroke-linejoin="round"/>
<circle cx="601.4" cy="54.9" r="1.2" fill="#2b2b2b"/>
<line x1="614.60" y1="40.80" x2="614.60" y2="59.00" stroke="#cfcfcf" stroke-width="1.3"/>
<text x="635.00" y="54.00" font-size="14.6" textLength="9.00" lengthAdjust="spacingAndGlyphs" font-weight="700" fill="#222" text-anchor="middle">A</text>
<circle cx="663.7" cy="47.1" r="4.6" fill="none" stroke="#2b2b2b" stroke-width="1.1"/>
<line x1="660.40" y1="50.50" x2="655.40" y2="55.60" stroke="#2b2b2b" stroke-width="1.3"/>
<text x="663.70" y="49.40" font-size="6.2" font-weight="700" fill="#222" text-anchor="middle">1</text>
<line x1="681.10" y1="42.30" x2="694.60" y2="42.30" stroke="#2b2b2b" stroke-width="1.35"/>
<line x1="681.40" y1="41.70" x2="681.40" y2="56.00" stroke="#2b2b2b" stroke-width="1.35"/>
<line x1="681.10" y1="45.60" x2="694.60" y2="45.60" stroke="#2b2b2b" stroke-width="1.35"/>
<line x1="684.70" y1="41.70" x2="684.70" y2="56.00" stroke="#2b2b2b" stroke-width="1.35"/>
<line x1="681.10" y1="48.90" x2="694.60" y2="48.90" stroke="#2b2b2b" stroke-width="1.35"/>
<line x1="688.00" y1="41.70" x2="688.00" y2="56.00" stroke="#2b2b2b" stroke-width="1.35"/>
<line x1="681.10" y1="52.20" x2="694.60" y2="52.20" stroke="#2b2b2b" stroke-width="1.35"/>
<line x1="691.30" y1="41.70" x2="691.30" y2="56.00" stroke="#2b2b2b" stroke-width="1.35"/>
<line x1="681.10" y1="55.50" x2="694.60" y2="55.50" stroke="#2b2b2b" stroke-width="1.35"/>
<line x1="694.60" y1="41.70" x2="694.60" y2="56.00" stroke="#2b2b2b" stroke-width="1.35"/>
<path d="M710.6,43.6 H707.6 V56.2 H722.4 V43.6 H719.8" fill="none" stroke="#2b2b2b" stroke-width="1.35" stroke-linejoin="round"/>
<path d="M710.2,41.2 h2.6 c1.8,0 2.8,1 2.8,2.6" fill="none" stroke="#2b2b2b" stroke-width="1.3"/><path d="M713.0,43.400000000000006 h5.2 l-2.6,3z" fill="#2b2b2b"/>
<line x1="711.60" y1="48.60" x2="720.20" y2="48.60" stroke="#2b2b2b" stroke-width="1.3"/>
<line x1="711.60" y1="51.00" x2="720.20" y2="51.00" stroke="#2b2b2b" stroke-width="1.3"/>
<line x1="711.60" y1="53.40" x2="720.20" y2="53.40" stroke="#2b2b2b" stroke-width="1.3"/>
<line x1="733.20" y1="44.60" x2="741.20" y2="44.60" stroke="#2b2b2b" stroke-width="1.15"/><line x1="733.20" y1="48.30" x2="741.20" y2="48.30" stroke="#2b2b2b" stroke-width="1.15"/><line x1="733.20" y1="52.00" x2="741.20" y2="52.00" stroke="#2b2b2b" stroke-width="1.15"/><line x1="733.20" y1="55.70" x2="741.20" y2="55.70" stroke="#2b2b2b" stroke-width="1.15"/><line x1="733.70" y1="44.20" x2="733.70" y2="56.20" stroke="#2b2b2b" stroke-width="1.15"/><line x1="737.40" y1="44.20" x2="737.40" y2="56.20" stroke="#2b2b2b" stroke-width="1.15"/><line x1="741.10" y1="44.20" x2="741.10" y2="56.20" stroke="#2b2b2b" stroke-width="1.15"/>
<path d="M736.4,41.2 h2.6 c1.8,0 2.8,1 2.8,2.6" fill="none" stroke="#2b2b2b" stroke-width="1.3"/><path d="M739.1999999999999,43.400000000000006 h5.2 l-2.6,3z" fill="#2b2b2b"/>
<path d="M743,46.6 h3.4 c2,0 3,1.2 3,3 v6.2 h-2.4 v-4.6 h-2 v4.6 h-2.6 c-1.2,-3 -1.2,-6 0.6,-9.2z" fill="#8a8a8a" stroke="#2b2b2b" stroke-width="1"/>
<line x1="759.80" y1="44.60" x2="767.80" y2="44.60" stroke="#2b2b2b" stroke-width="1.15"/><line x1="759.80" y1="48.30" x2="767.80" y2="48.30" stroke="#2b2b2b" stroke-width="1.15"/><line x1="759.80" y1="52.00" x2="767.80" y2="52.00" stroke="#2b2b2b" stroke-width="1.15"/><line x1="759.80" y1="55.70" x2="767.80" y2="55.70" stroke="#2b2b2b" stroke-width="1.15"/><line x1="760.30" y1="44.20" x2="760.30" y2="56.20" stroke="#2b2b2b" stroke-width="1.15"/><line x1="764.00" y1="44.20" x2="764.00" y2="56.20" stroke="#2b2b2b" stroke-width="1.15"/><line x1="767.70" y1="44.20" x2="767.70" y2="56.20" stroke="#2b2b2b" stroke-width="1.15"/>
<path d="M763,41.2 h2.6 c1.8,0 2.8,1 2.8,2.6" fill="none" stroke="#2b2b2b" stroke-width="1.3"/><path d="M765.8,43.400000000000006 h5.2 l-2.6,3z" fill="#2b2b2b"/>
<path d="M768.8,48.4 l1.6,-2 h4.6 l1.6,2 v7.6 h-7.8z" fill="#fff" stroke="#2b2b2b" stroke-width="1.1"/>
<circle cx="772.7" cy="52" r="2.3" fill="#aaa" stroke="#2b2b2b" stroke-width="0.8"/>
<line x1="786.40" y1="44.60" x2="794.40" y2="44.60" stroke="#2b2b2b" stroke-width="1.15"/><line x1="786.40" y1="48.30" x2="794.40" y2="48.30" stroke="#2b2b2b" stroke-width="1.15"/><line x1="786.40" y1="52.00" x2="794.40" y2="52.00" stroke="#2b2b2b" stroke-width="1.15"/><line x1="786.40" y1="55.70" x2="794.40" y2="55.70" stroke="#2b2b2b" stroke-width="1.15"/><line x1="786.90" y1="44.20" x2="786.90" y2="56.20" stroke="#2b2b2b" stroke-width="1.15"/><line x1="790.60" y1="44.20" x2="790.60" y2="56.20" stroke="#2b2b2b" stroke-width="1.15"/><line x1="794.30" y1="44.20" x2="794.30" y2="56.20" stroke="#2b2b2b" stroke-width="1.15"/>
<path d="M789.6,41.2 h2.6 c1.8,0 2.8,1 2.8,2.6" fill="none" stroke="#2b2b2b" stroke-width="1.3"/><path d="M792.4,43.400000000000006 h5.2 l-2.6,3z" fill="#2b2b2b"/>
<path d="M796.6,43.6 h3.4 v4" fill="none" stroke="#2b2b2b" stroke-width="1" stroke-dasharray="1.6 0.9"/>
<path d="M797.8,47 L803.4,56.2 H792.2Z" fill="#2b2b2b"/>
<line x1="814.80" y1="40.80" x2="814.80" y2="59.00" stroke="#cfcfcf" stroke-width="1.3"/>
<line x1="829.00" y1="43.70" x2="841.00" y2="55.00" stroke="#2b2b2b" stroke-width="1.1"/>
<circle cx="828.5" cy="43.2" r="1.55" fill="#fff" stroke="#3b6ea8" stroke-width="0.95"/>
<circle cx="841.4" cy="55.3" r="1.55" fill="#fff" stroke="#3b6ea8" stroke-width="0.95"/>
<path d="M855,47.6 c6,0 9,-1.4 13.4,-4.2 M855,52.8 c6,0 9,1.4 13.4,3.6" fill="none" stroke="#3b6ea8" stroke-width="1.15"/>
<line x1="855.00" y1="50.20" x2="868.60" y2="50.20" stroke="#2b2b2b" stroke-width="1.1" stroke-dasharray="3 1.2"/>
<circle cx="888.6" cy="50" r="6" fill="none" stroke="#2b2b2b" stroke-width="1.05" stroke-dasharray="2.4 1"/>
<circle cx="888.6" cy="43.8" r="1.55" fill="#fff" stroke="#3b6ea8" stroke-width="0.95"/>
<circle cx="883" cy="53.4" r="1.55" fill="#fff" stroke="#3b6ea8" stroke-width="0.95"/>
<circle cx="894.2" cy="53.4" r="1.55" fill="#fff" stroke="#3b6ea8" stroke-width="0.95"/>
<path d="M887.4,50 h2.4 M888.6,48.8 v2.4" fill="none" stroke="#3b6ea8" stroke-width="1.15"/>
<circle cx="915.4" cy="50" r="6" fill="none" stroke="#2b2b2b" stroke-width="1.05" stroke-dasharray="7 1"/>
<circle cx="915.4" cy="43.6" r="1.55" fill="#fff" stroke="#3b6ea8" stroke-width="0.95"/>
<path d="M914.2,50 h2.4 M915.4,48.8 v2.4" fill="none" stroke="#3b6ea8" stroke-width="1.15"/>
<circle cx="942" cy="49.6" r="6.7" fill="none" stroke="#3b6ea8" stroke-width="1.15"/>
<path d="M938.6,49.6 h6.8 M942,46.2 v6.8" fill="none" stroke="#2b2b2b" stroke-width="1.3"/>
<path d="M962.2,55.8 L973.4,44.4 H975.8" fill="none" stroke="#3b6ea8" stroke-width="1.25"/>
<path d="M961.6,44.4 h4 M963.6,42.4 v4" stroke="#2b2b2b" stroke-width="1.15" fill="none"/>
<line x1="967.20" y1="44.40" x2="971.60" y2="44.40" stroke="#3b6ea8" stroke-width="0.8" stroke-dasharray="1.6 1"/>
<line x1="963.60" y1="48.00" x2="963.60" y2="52.40" stroke="#3b6ea8" stroke-width="0.8" stroke-dasharray="1.6 1"/>
<line x1="988.50" y1="40.80" x2="988.50" y2="59.00" stroke="#cfcfcf" stroke-width="1.3"/>
<line x1="1001.60" y1="55.00" x2="1014.40" y2="43.20" stroke="#2b2b2b" stroke-width="1.5"/>
<circle cx="1001.3" cy="55.3" r="1.55" fill="#fff" stroke="#999" stroke-width="0.95"/>
<circle cx="1014.7" cy="43" r="1.55" fill="#fff" stroke="#999" stroke-width="0.95"/>
<circle cx="1035.6" cy="50" r="7.3" fill="none" stroke="#2b2b2b" stroke-width="1.05"/>
<circle cx="1035.6" cy="50" r="1.55" fill="#fff" stroke="#3b6ea8" stroke-width="0.95"/>
<circle cx="1041.4" cy="44.6" r="1.55" fill="#fff" stroke="#3b6ea8" stroke-width="0.95"/>
<path d="M1051.6,47.6 h5.6 l-2.8,3.4z" fill="#1d3a66"/>
<rect x="1069.00" y="44.40" width="12.20" height="10.80" fill="none" stroke="#2b2b2b" stroke-width="1.15"/>
<circle cx="1081.2" cy="44.2" r="1.55" fill="#fff" stroke="#3b6ea8" stroke-width="0.95"/>
<circle cx="1069" cy="55.2" r="1.55" fill="#fff" stroke="#3b6ea8" stroke-width="0.95"/>
<path d="M1090.2,47.6 h5.6 l-2.8,3.4z" fill="#1d3a66"/>
<path d="M1107.6,55 c1,-5.4 4,-4.4 6.6,-5.6 c3,-1.4 3.4,-4 6.8,-5.8" fill="none" stroke="#2b2b2b" stroke-width="1.15"/>
<circle cx="1107.4" cy="55.2" r="1.55" fill="#fff" stroke="#3b6ea8" stroke-width="0.95"/>
<circle cx="1114.4" cy="49.4" r="1.55" fill="#fff" stroke="#3b6ea8" stroke-width="0.95"/>
<circle cx="1121.2" cy="43.6" r="1.55" fill="#fff" stroke="#3b6ea8" stroke-width="0.95"/>
<path d="M1129.4,47.6 h5.6 l-2.8,3.4z" fill="#1d3a66"/>
<clipPath id="hc"><rect x="1146.2" y="42.8" width="13.2" height="13"/></clipPath>
<g clip-path="url(#hc)" stroke="#2b2b2b" stroke-width="1.25"><line x1="1136.00" y1="56.40" x2="1149.40" y2="42.40" /><line x1="1139.05" y1="56.40" x2="1152.45" y2="42.40" /><line x1="1142.10" y1="56.40" x2="1155.50" y2="42.40" /><line x1="1145.15" y1="56.40" x2="1158.55" y2="42.40" /><line x1="1148.20" y1="56.40" x2="1161.60" y2="42.40" /><line x1="1151.25" y1="56.40" x2="1164.65" y2="42.40" /><line x1="1154.30" y1="56.40" x2="1167.70" y2="42.40" /><line x1="1157.35" y1="56.40" x2="1170.75" y2="42.40" /><line x1="1160.40" y1="56.40" x2="1173.80" y2="42.40" /></g>
<rect x="1146.20" y="42.80" width="13.20" height="13.00" fill="none" stroke="#2b2b2b" stroke-width="1.1"/>
<line x1="1172.80" y1="40.80" x2="1172.80" y2="59.00" stroke="#cfcfcf" stroke-width="1.3"/>
<path d="M1188.6,42.6 H1186.4 V56.5 H1199 V46 L1195.6,42.6 H1195" fill="none" stroke="#2b2b2b" stroke-width="1.35" stroke-linejoin="round"/>
<text x="1192.70" y="55.30" font-size="5.4" textLength="10.00" lengthAdjust="spacingAndGlyphs" font-weight="700" fill="#222" text-anchor="middle">DXF</text>
<path d="M1188.4,40.9 h2.6 c1.8,0 2.8,1 2.8,2.6" fill="none" stroke="#2b2b2b" stroke-width="1.3"/><path d="M1191.2,43.1 h5.2 l-2.6,3z" fill="#2b2b2b"/>
<path d="M1214.4,43.7 H1211.6 V56.5 H1226.6 V43.7 H1222.6" fill="none" stroke="#2b2b2b" stroke-width="1.35" stroke-linejoin="round"/>
<path d="M1213.6,54.6 l3.6,-5.2 l2.4,3.2 l1.6,-2 l3.4,4z" fill="none" stroke="#2b2b2b" stroke-width="0.95" stroke-linejoin="round"/>
<circle cx="1223.6" cy="46.6" r="1.3" fill="none" stroke="#2b2b2b" stroke-width="0.8"/>
<path d="M1214.2,41.4 h2.6 c1.8,0 2.8,1 2.8,2.6" fill="none" stroke="#2b2b2b" stroke-width="1.3"/><path d="M1217.0,43.6 h5.2 l-2.6,3z" fill="#2b2b2b"/>
<line x1="1242.60" y1="52.80" x2="1252.80" y2="43.00" stroke="#2b2b2b" stroke-width="2.1"/>
<path d="M1239.4,55.8 l1.8,-3.6 l2.4,2.4z" fill="#fff" stroke="#2b2b2b" stroke-width="0.9"/>
<line x1="1265.60" y1="40.80" x2="1265.60" y2="59.00" stroke="#cfcfcf" stroke-width="1.3"/>
<circle cx="1284.4" cy="47" r="5.2" fill="none" stroke="#1c1c2a" stroke-width="1.7"/>
<line x1="1288.20" y1="51.00" x2="1292.60" y2="55.60" stroke="#1c1c2a" stroke-width="2.1"/>
<path d="M1281.4,46.4 l3,3.4 l7,-8" fill="none" stroke="#1f58b8" stroke-width="2"/>
<circle cx="1311" cy="47" r="5.2" fill="none" stroke="#2b2b2b" stroke-width="1.7"/>
<line x1="1314.80" y1="51.00" x2="1319.40" y2="55.60" stroke="#2b2b2b" stroke-width="2.1"/>
<path d="M1308.6,48.6 c1,-2.6 3,-4.4 5.6,-4.8 M1311,49.8 c1,-2.6 3.4,-4.600000000000001 6,-5.2 M1309.6,50.2 l6.6,-8.4" fill="none" stroke="#2b2b2b" stroke-width="0.9"/></g>
<g id="rl"><circle cx="11.6" cy="44.4" r="2.6" fill="none" stroke="#2b2b2b" stroke-width="1.3"/>
<path d="M11.6,47 V53.6 M11.6,51.4 c3.4,0 5,-1 5.6,-3.2" fill="none" stroke="#2b2b2b" stroke-width="1.3"/>
<circle cx="11.6" cy="54" r="1.5" fill="#2b2b2b"/><circle cx="17.4" cy="47.8" r="1.5" fill="#2b2b2b"/>
<path d="M16.8,42.4 H25 M20.6,47.2 H25 M20.6,50.6 H25 M16.8,54.8 H25" fill="none" stroke="#2b2b2b" stroke-width="1.7"/>
<circle cx="13" cy="77.3" r="2.6" fill="#2b2b2b"/>
<line x1="13.00" y1="70.00" x2="13.00" y2="84.80" stroke="#2b2b2b" stroke-width="1.3" stroke-dasharray="2 1.6"/>
<path d="M17.4,82 h7 M20.9,78.5 v7" fill="none" stroke="#1b57b5" stroke-width="1.7"/>
<path d="M15.6,99.4 L21.2,109 H9.6Z" fill="#2b2b2b"/>
<path d="M16.2,112.8 l1,-2.8 l6.2,-6 l1.8,1.8 l-6.2,6z" fill="#f8f8f8" stroke="#2b2b2b" stroke-width="1"/>
<ellipse cx="17" cy="134.6" rx="8.1" ry="5.9" fill="#2b2b2b"/>
<path d="M12.4,138.4 L9.4,143 L16,140z" fill="#2b2b2b"/>
<path d="M9,162.4 L13.8,160.2 L18.6,162.4 V168.6 L13.8,171.2 L9,168.6Z M9,162.4 L13.8,164.8 L18.6,162.4 M13.8,164.8 V171.2" fill="none" stroke="#2b2b2b" stroke-width="1.25" stroke-linejoin="round"/>
<circle cx="21.6" cy="160.4" r="3" fill="none" stroke="#2b2b2b" stroke-width="1.2"/>
<text x="21.60" y="162.30" font-size="5.4" font-weight="700" fill="#2b2b2b" text-anchor="middle">?</text>
<line x1="20.60" y1="163.40" x2="19.40" y2="166.00" stroke="#2b2b2b" stroke-width="1.2"/>
<circle cx="17.6" cy="194.6" r="5.8" fill="none" stroke="#2b2b2b" stroke-width="1.5"/>
<path d="M15.6,186.8 h4 M17.6,187 v2 M22,189.6 l1.2,-1.2 M17.6,194.6 l2.4,-2.4" fill="none" stroke="#2b2b2b" stroke-width="1.4"/>
<path d="M9.4,191.6 h3.4 M8.8,194.6 h3 M9.4,197.6 h3.4" fill="none" stroke="#2b2b2b" stroke-width="1"/>
<line x1="0.00" y1="209.40" x2="32.50" y2="209.40" stroke="#dcdcdc" stroke-width="1"/>
<rect x="10.90" y="217.20" width="11.80" height="14.40" rx="1.6" fill="none" stroke="#2b2b2b" stroke-width="1.4"/>
<line x1="17.00" y1="221.20" x2="20.60" y2="221.20" stroke="#2b2b2b" stroke-width="1.5"/>
<path d="M12.8,221.2 l1,1 l1.8,-2.2" fill="none" stroke="#2b2b2b" stroke-width="0.8"/>
<line x1="17.00" y1="224.60" x2="20.60" y2="224.60" stroke="#2b2b2b" stroke-width="1.5"/>
<path d="M12.8,224.6 l1,1 l1.8,-2.2" fill="none" stroke="#2b2b2b" stroke-width="0.8"/>
<line x1="17.00" y1="228.00" x2="20.60" y2="228.00" stroke="#2b2b2b" stroke-width="1.5"/>
<path d="M12.8,228 l1,1 l1.8,-2.2" fill="none" stroke="#2b2b2b" stroke-width="0.8"/>
<path d="M9.2,882.6 h14.6 v4.6 h-14.6z" fill="#2b2b2b"/>
<circle cx="17.6" cy="889.4" r="3.7" fill="#f8f8f8" stroke="#f8f8f8" stroke-width="2.6"/><circle cx="17.6" cy="889.4" r="3.3" fill="#f8f8f8" stroke="#2b2b2b" stroke-width="1.5"/>
<line x1="20.20" y1="892.00" x2="23.40" y2="895.00" stroke="#2b2b2b" stroke-width="1.8"/></g>
<g id="pn"><text x="95.90" y="84.70" font-size="15.8" textLength="68.70" lengthAdjust="spacingAndGlyphs" fill="#2b5797" stroke="#2b5797" stroke-width="0.55">Sheets (1)</text>
<rect x="224.00" y="68.40" width="25.00" height="24.40" fill="#fff"/>
<path d="M231.3,75.2 V74.4 c0,-0.7 0.4,-1.1 1.1,-1.1 H241.7 c0.7,0 1.1,0.4 1.1,1.1 V82.2 c0,0.7 -0.4,1.1 -1.1,1.1 H240.8" fill="none" stroke="#2b2b2b" stroke-width="1.1"/>
<path d="M229.2,78.7 V76.4 c0,-0.7 0.4,-1.1 1.1,-1.1 H239.6 c0.7,0 1.1,0.4 1.1,1.1 V83.4 c0,0.7 -0.4,1.1 -1.1,1.1 H235.4" fill="#fff" stroke="#2b2b2b" stroke-width="1.25"/>
<rect x="236.20" y="81.40" width="4.50" height="3.10" fill="#fff" stroke="#2b2b2b" stroke-width="1.1"/>
<path d="M227.3,83.3 h6.8 M230.7,79.9 v6.8" fill="none" stroke="#1f5fb5" stroke-width="1.8"/>
<rect x="34.00" y="95.00" width="215.00" height="1.50" fill="#2b5797"/>
<rect x="34.00" y="96.50" width="215.00" height="21.40" fill="#fff"/>
<text x="58.00" y="110.40" font-size="11.4" textLength="59.60" lengthAdjust="spacingAndGlyphs" fill="#2b5797" stroke="#2b5797" stroke-width="0.4">Sort by sheet</text>
<text x="156.80" y="110.40" font-size="11.2" textLength="76.20" lengthAdjust="spacingAndGlyphs" fill="#444">Sort by reference</text>
<rect x="34.00" y="117.40" width="107.50" height="1.70" fill="#2b5797"/>
<rect x="141.50" y="118.00" width="107.50" height="0.80" fill="#e4e4e4"/>
<rect x="34.00" y="119.20" width="215.00" height="2.20" fill="#fdfdfd"/>
<rect x="34.00" y="121.40" width="215.00" height="20.40" fill="#e4e9ee"/>
<rect x="36.30" y="121.50" width="2.70" height="20.10" fill="#2b5797"/>
<line x1="34.00" y1="142.00" x2="249.00" y2="142.00" stroke="#cfdfee" stroke-width="1.2"/>
<path d="M44.6,129.6 l3.6,3.8 l3.6,-3.8" fill="none" stroke="#444" stroke-width="1.5"/>
<rect x="64.90" y="126.60" width="13.20" height="11.40" fill="#fff" stroke="#222" stroke-width="1.3"/>
<path d="M73.2,138 V134.9 H78.1" fill="none" stroke="#222" stroke-width="1.2"/>
<text x="82.80" y="135.60" font-size="11.8" textLength="47.90" lengthAdjust="spacingAndGlyphs" fill="#2b5797" stroke="#2b5797" stroke-width="0.45">Sheet1 (1)</text>
<path d="M60.4,150.8 l3.8,3.8 l3.8,-3.8" fill="none" stroke="#444" stroke-width="1.5"/>
<path d="M86.4,146.4 h6 c1.2,0 2,0.8 2,2 V158 c0,1.2 -0.8,2 -2,2 H82.6 c-1.2,0 -2,-0.8 -2,-2 v-3 c0,-1.2 0.8,-2 2,-2 h2 v-4.6 c0,-1.2 0.6,-2 1.8,-2z M80.8,156.6 H88.2 c1.4,0 2,-0.6 2,-2 V146.6" fill="none" stroke="#2b2b2b" stroke-width="1.2" stroke-linejoin="round"/>
<text x="98.60" y="156.20" font-size="11.6" textLength="59.80" lengthAdjust="spacingAndGlyphs" fill="#707070">Water Bottle</text>
<rect x="162.60" y="144.20" width="52.20" height="16.40" rx="3" fill="#8cc7ee"/>
<text x="166.00" y="156.00" font-size="10.6" textLength="45.40" lengthAdjust="spacingAndGlyphs" fill="#163752" stroke="#163752" stroke-width="0.25">In progress</text>
<path d="M96.6,167.4 H105.7 V170.4 H96.6Z M101.8,167.4 V170.4" fill="none" stroke="#484848" stroke-width="1.2" stroke-linejoin="round"/>
<path d="M96.6,175 H102 V178.3 H105.7 V182.4 H96.6Z" fill="none" stroke="#484848" stroke-width="1.3" stroke-linejoin="round"/>
<line x1="97.00" y1="172.60" x2="107.00" y2="172.60" stroke="#b5cbe3" stroke-width="0.9"/>
<rect x="108.40" y="175.30" width="3.20" height="7.10" rx="1" fill="none" stroke="#484848" stroke-width="1.15"/>
<line x1="108.40" y1="178.70" x2="111.60" y2="178.70" stroke="#484848" stroke-width="1"/>
<text x="115.40" y="177.80" font-size="11.6" textLength="25.20" lengthAdjust="spacingAndGlyphs" fill="#707070">Front</text>
<path d="M113.4,189.6 H128.20000000000002 V193.0 H113.4Z M122.60000000000001,189.6 V193.0 M113.4,196.0 H122.60000000000001 V200.1 H128.20000000000002 V203.6 H113.4Z" fill="none" stroke="#484848" stroke-width="1.2" stroke-linejoin="round"/>
<text x="131.90" y="199.80" font-size="11.6" textLength="24.50" lengthAdjust="spacingAndGlyphs" fill="#707070">Right</text>
<path d="M113.4,211.3 H128.20000000000002 V214.70000000000002 H113.4Z M122.60000000000001,211.3 V214.70000000000002 M113.4,217.70000000000002 H122.60000000000001 V221.8 H128.20000000000002 V225.3 H113.4Z" fill="none" stroke="#484848" stroke-width="1.2" stroke-linejoin="round"/>
<text x="131.90" y="221.10" font-size="11.6" textLength="17.60" lengthAdjust="spacingAndGlyphs" fill="#707070">Top</text>
<path d="M113.4,232.9 H128.20000000000002 V236.3 H113.4Z M122.60000000000001,232.9 V236.3 M113.4,239.3 H122.60000000000001 V243.4 H128.20000000000002 V246.9 H113.4Z" fill="none" stroke="#484848" stroke-width="1.2" stroke-linejoin="round"/>
<text x="131.90" y="242.80" font-size="11.6" textLength="44.40" lengthAdjust="spacingAndGlyphs" fill="#707070">Isometric</text></g>
<g id="ms"><rect x="249.00" y="456.00" width="27.00" height="26.40" fill="#fff"/>
<path d="M258.6,464 l1.6,-1.6 H269.4 V470.6 l-1.4,1.4" fill="none" stroke="#2b2b2b" stroke-width="0.9"/>
<path d="M257.2,465.4 l1.4,-1.4 H268 V472 l-1.4,1.4" fill="none" stroke="#2b2b2b" stroke-width="0.9"/>
<rect x="255.60" y="466.20" width="11.00" height="9.00" fill="#fff" stroke="#2b2b2b" stroke-width="1.1"/>
<rect x="262.60" y="472.00" width="4.00" height="3.20" fill="#fff" stroke="#2b2b2b" stroke-width="0.9"/>
<rect x="1573.60" y="427.20" width="26.40" height="83.20" fill="#fff"/>
<line x1="1573.60" y1="454.80" x2="1600.00" y2="454.80" stroke="#dcdcdc" stroke-width="1"/>
<line x1="1573.60" y1="482.40" x2="1600.00" y2="482.40" stroke="#dcdcdc" stroke-width="1"/>
<rect x="1579.40" y="433.60" width="6.60" height="5.60" fill="#555" stroke="#2b2b2b" stroke-width="0.8"/>
<circle cx="1587.4" cy="441.6" r="3.9" fill="none" stroke="#1d3a66" stroke-width="1.5"/>
<line x1="1590.40" y1="444.60" x2="1594.40" y2="448.60" stroke="#2b2b2b" stroke-width="1.7"/>
<path d="M1584.8,439.6 l2.2,2.4 l5,-5.6" fill="none" stroke="#1f58b8" stroke-width="1.6"/>
<path d="M1588.6,461.8 c3.8,0 6.4,2.8 6.4,6.200000000000001 c0,3.2 -2.2,4.2 -3.8,3.6 c-1.4,-0.6 -2.4,0.2 -2.2,1.6 c0.2,1.8 -1,2.4 -2.2,2.4 c-3.2,0 -5.4,-2.8 -5.4,-6.4 c0,-4 3.2,-7.4 7.2,-7.4z" fill="#fff" stroke="#2b2b2b" stroke-width="1.05"/>
<circle cx="1590.4" cy="465" r="1" fill="none" stroke="#555" stroke-width="0.7"/><circle cx="1592.4" cy="468.4" r="1" fill="none" stroke="#555" stroke-width="0.7"/><circle cx="1585" cy="471.4" r="1.1" fill="none" stroke="#555" stroke-width="0.7"/>
<line x1="1586.20" y1="467.20" x2="1591.60" y2="475.60" stroke="#2b2b2b" stroke-width="2"/>
<path d="M1583,460.6 c1.6,1.2 3,3.4 3.4,6.4 l-2,1.2 c-1.2,-2.4 -1.8,-4.800000000000001 -1.4,-7.6z" fill="#fff" stroke="#2b2b2b" stroke-width="0.9"/>
<path d="M1584.6,490 c-2.6,0.6 -3.6,3.6 -2,5.6 c1.2,1.4 3,1.6 4.400000000000001,1 l5.6,6 c0.8,0.8 2,0.8 2.6,0 c0.6,-0.6 0.6,-1.8 -0.2,-2.6 l-6,-5.6 c0.6,-1.6 0.2,-3.4 -1.2,-4.4 l-0.4,2.600000000000001 l-2,0.6 l-1.4,-1.6z" fill="none" stroke="#2b2b2b" stroke-width="1" stroke-linejoin="round"/>
<rect x="1573.80" y="847.80" width="26.20" height="26.20" fill="#fff"/>
<path d="M1581.4,860.4 h10.6 c1.6,0 2.4,-1 2.4,-2.4 c0,-1.8 -1.8,-2.8 -4.2,-2.8 c-2.4,0 -4.2,1 -4.2,2.8 v2.2" fill="none" stroke="#2b2b2b" stroke-width="1.1"/>
<rect x="1581.40" y="860.20" width="11.40" height="3.60" fill="#2b2b2b"/>
<ellipse cx="1590.2" cy="857.8" rx="2" ry="1.1" fill="none" stroke="#2b2b2b" stroke-width="0.8"/></g>
<g id="tbs"><path d="M40.8,887.1 h12.2 M46.9,881 v12.2" fill="none" stroke="#505050" stroke-width="1.8"/>
<path d="M67,875.6 H232.5 V893 q0,3 -3,3 H70 q-3,0 -3,-3Z" fill="#ececec"/><text x="94.20" y="890.70" font-size="12" textLength="64.20" lengthAdjust="spacingAndGlyphs" fill="#6a6a6a">Water Bottle</text>
<path d="M235,875.6 H400.5 V896.6 H235Z" fill="#fff"/><rect x="235.00" y="896.60" width="165.50" height="1.60" fill="#2b5797"/><text x="261.70" y="890.70" font-size="12" textLength="119.30" lengthAdjust="spacingAndGlyphs" fill="#333">Water Bottle Drawing 1</text>
<path d="M403,875.6 H568.5 V893 q0,3 -3,3 H406 q-3,0 -3,-3Z" fill="#ececec"/><text x="430.60" y="890.70" font-size="12" textLength="25.60" lengthAdjust="spacingAndGlyphs" fill="#6a6a6a">Cage</text>
<path d="M571,875.6 H737 V893 q0,3 -3,3 H574 q-3,0 -3,-3Z" fill="#ececec"/><text x="598.60" y="890.70" font-size="12" textLength="58.90" lengthAdjust="spacingAndGlyphs" fill="#6a6a6a">Assembly 1</text>
<path d="M76.39999999999999,882.6 l2.4,-1.2 h2.6 V892 l-2.4,1.2 h-2.6z" fill="#ececec" stroke="#444" stroke-width="1.1" stroke-linejoin="round"/>
<path d="M82.2,881 c0,-1.6 1.4,-2.4 3.4,-2.4 c2,0 3.4,0.8 3.4,2.4 V892 c0,0.8 -1.4,1.4 -3.4,1.4 c-2,0 -3.4,-0.6 -3.4,-1.4z" fill="#ececec" stroke="#444" stroke-width="1.1"/>
<line x1="85.00" y1="879.60" x2="85.00" y2="892.60" stroke="#444" stroke-width="0.8"/>
<path d="M413.40000000000003,882.6 l2.4,-1.2 h2.6 V892 l-2.4,1.2 h-2.6z" fill="#ececec" stroke="#444" stroke-width="1.1" stroke-linejoin="round"/>
<path d="M419.2,881 c0,-1.6 1.4,-2.4 3.4,-2.4 c2,0 3.4,0.8 3.4,2.4 V892 c0,0.8 -1.4,1.4 -3.4,1.4 c-2,0 -3.4,-0.6 -3.4,-1.4z" fill="#ececec" stroke="#444" stroke-width="1.1"/>
<line x1="422.00" y1="879.60" x2="422.00" y2="892.60" stroke="#444" stroke-width="0.8"/>
<rect x="243.90" y="879.90" width="13.80" height="12.00" fill="#fff" stroke="#333" stroke-width="1.3"/>
<path d="M252.2,891.8 V888 H257.6" fill="none" stroke="#333" stroke-width="1.1"/>
<path d="M580.7,878.3 H591.4 L594.8,881.7 V893.2 H583.8 L580.7,890.1Z" fill="#f4f4f4" stroke="#444" stroke-width="1.2" stroke-linejoin="round"/>
<rect x="582.50" y="880.10" width="8.60" height="8.10" fill="#8a8a8a" stroke="#444" stroke-width="0.8"/>
<path d="M591.1,880.1 L593.4,882.4 V890.6 M582.5,888.2 L584.8,890.6 H593.4" fill="none" stroke="#444" stroke-width="0.7"/></g>
</svg>
</div></body></html>
